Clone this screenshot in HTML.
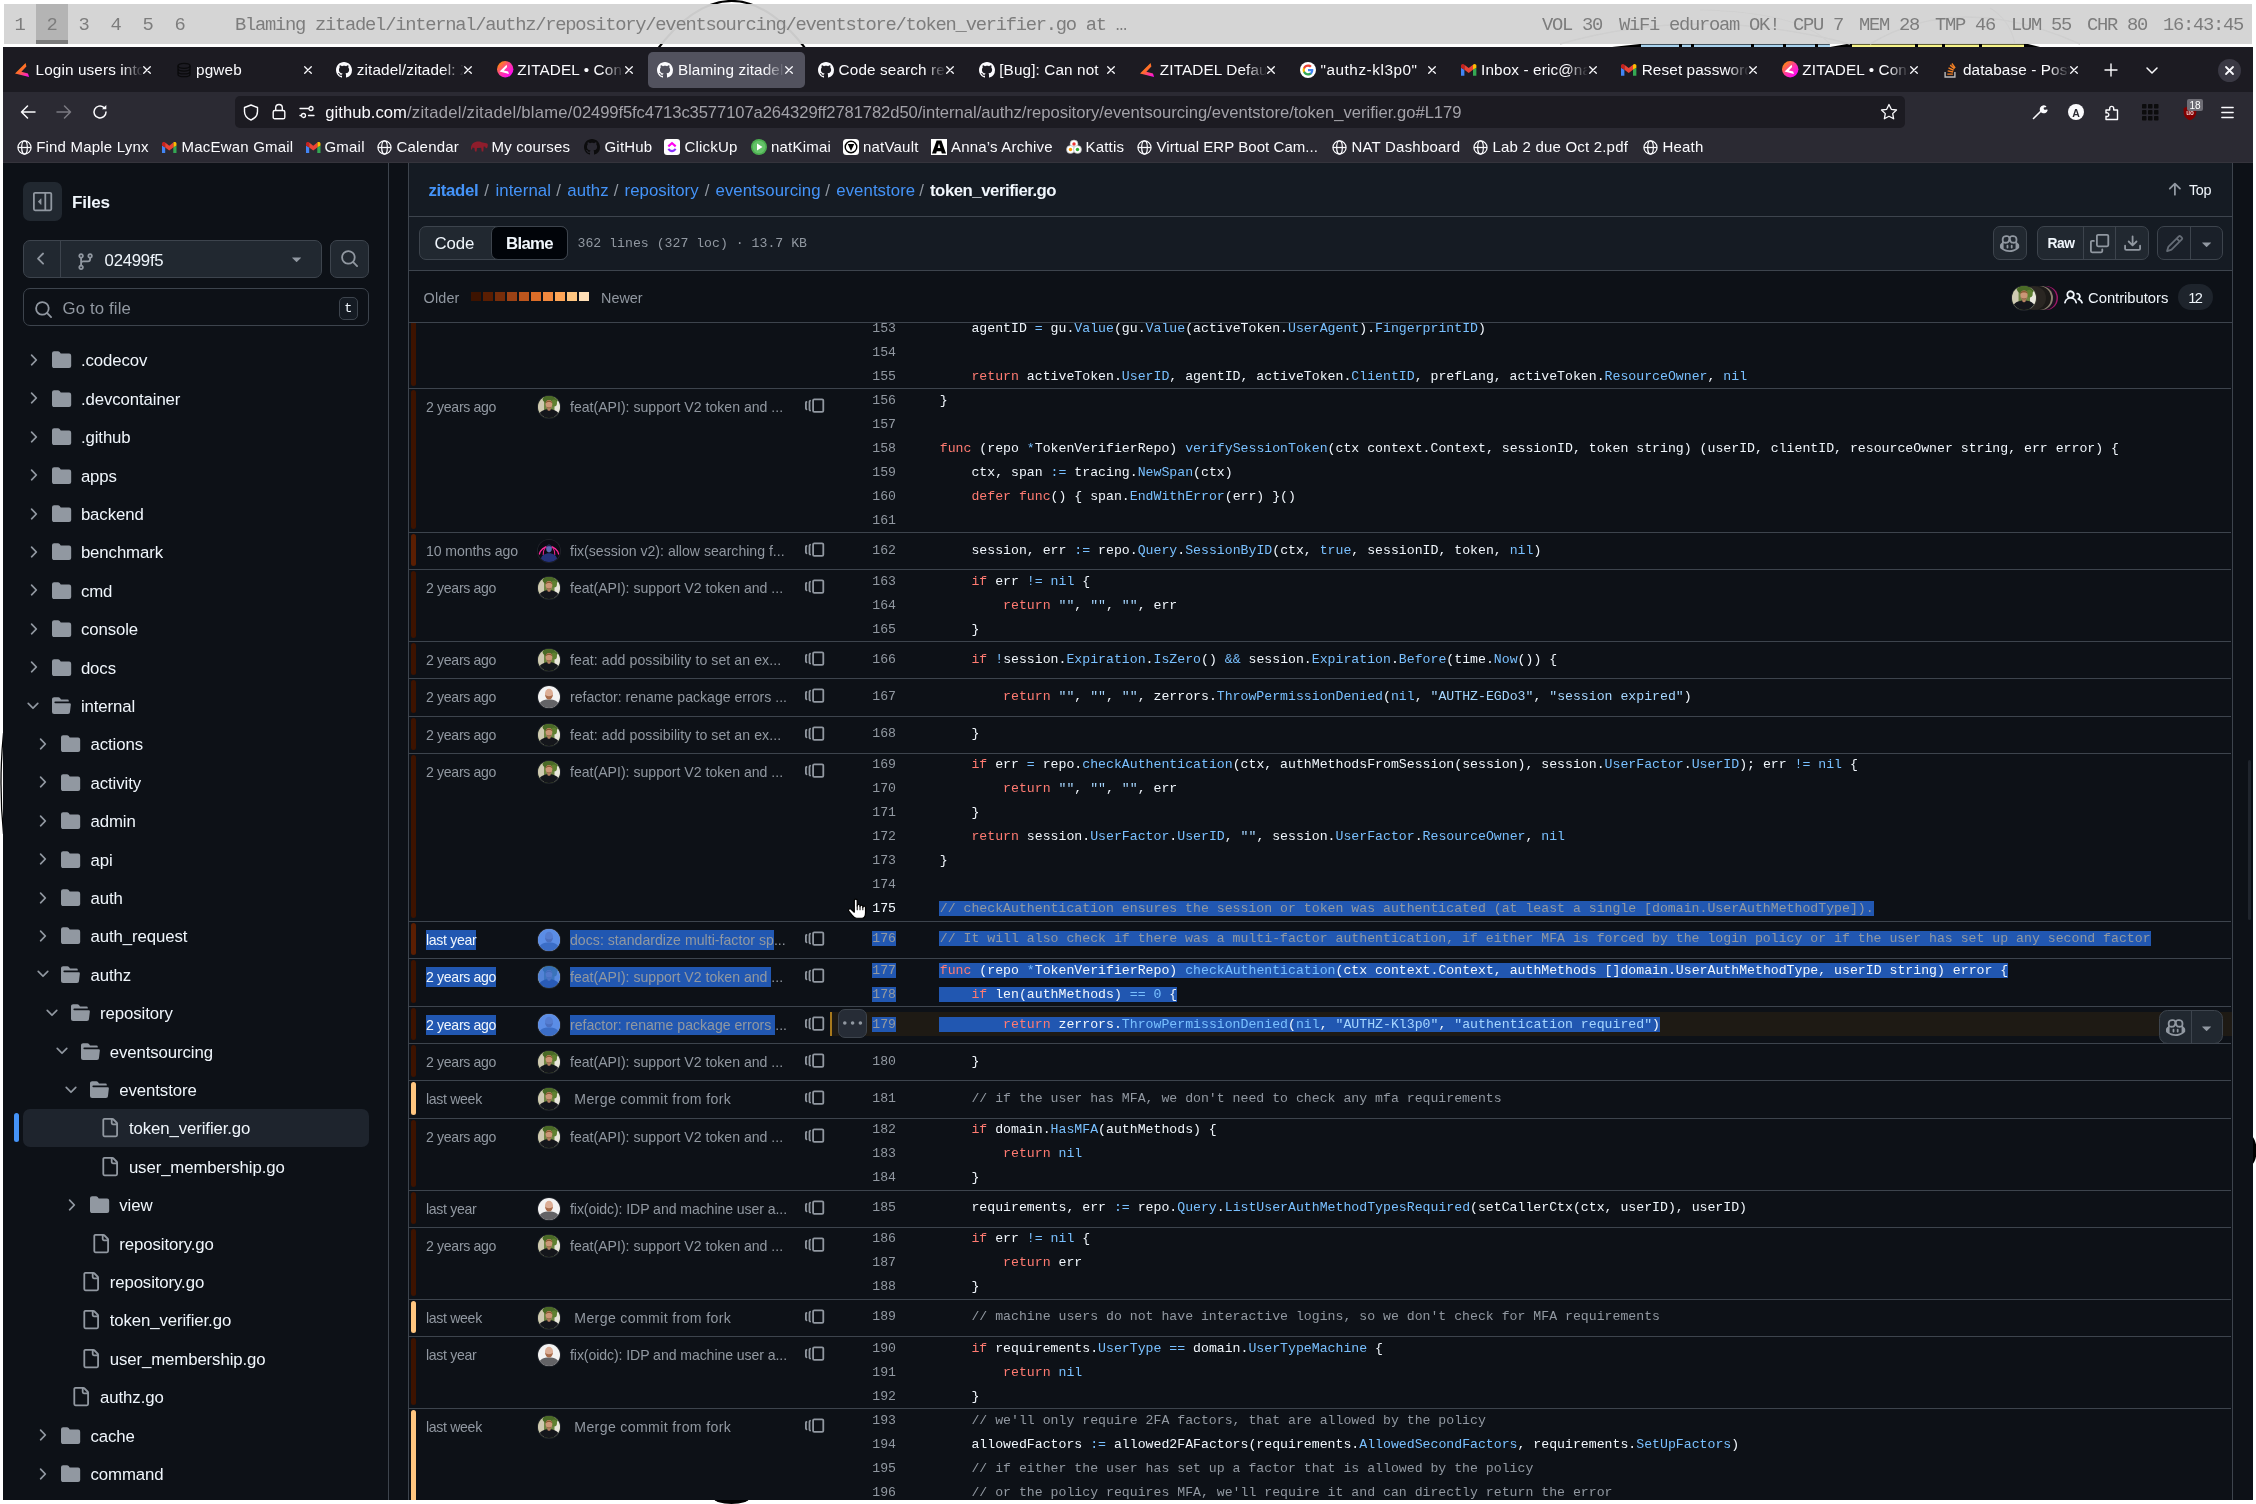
<!DOCTYPE html><html><head><meta charset="utf-8"><title>Blaming zitadel</title><style>
*{box-sizing:border-box}
html,body{margin:0;padding:0}
body{width:2256px;height:1504px;background:#fff;position:relative;overflow:hidden;font-family:"Liberation Sans",sans-serif;-webkit-font-smoothing:antialiased}
.a{position:absolute}
.t{position:absolute;height:30px;line-height:30px;white-space:pre}
svg{position:absolute;overflow:visible}
#win{position:absolute;left:3px;top:47px;width:2250px;height:1453px;background:#0d1117;overflow:hidden}
#pg{position:absolute;left:-3px;top:-47px;width:2256px;height:1504px;will-change:transform}
.m{font-family:"Liberation Mono",monospace}
.cl{position:absolute;left:939.8px;height:24px;line-height:24px;font-family:"Liberation Mono",monospace;font-size:13.2px;color:#f0f6fc;white-space:pre}
.ln{position:absolute;left:846px;width:50px;text-align:right;height:24px;line-height:24px;font-family:"Liberation Mono",monospace;font-size:13.2px;color:#9198a1;white-space:pre}
.k{color:#ff7b72}.b{color:#79c0ff}.s{color:#a5d6ff}.c{color:#9198a1}
.sel{background:#2157b1;padding-left:1px;margin-left:-1px}
.sel2{background:#2157b1;padding:1.8px 0 1.6px}
.hb{position:absolute;left:409px;width:1822px;height:1px;background:#3d444d}
</style></head><body>
<svg class="a" style="left:0;top:0" width="2256" height="1504" viewBox="0 0 2256 1504"><path d="M655 52.300Q731.600-50.300 808.300 52.300" fill="none" stroke="#000" stroke-width="2.200"/><path d="M1612 47 1640 44H1830V47z" fill="#000"/><rect x="1641" y="44.600" width="189" height="3" fill="#aad4f0"/><path d="M1830 47 1850 43.500H2026L2040 47z" fill="#000"/><rect x="1852" y="44.600" width="172" height="3" fill="#f7f48a"/><rect x="1679" y="44" width="3" height="3" fill="#000"/><rect x="1691" y="44" width="3" height="3" fill="#000"/><rect x="1751" y="44" width="3" height="3" fill="#000"/><rect x="1783" y="44" width="3" height="3" fill="#000"/><rect x="1815" y="44" width="3" height="3" fill="#000"/><rect x="1915" y="44" width="3" height="3" fill="#000"/><rect x="1942" y="44" width="3" height="3" fill="#000"/><rect x="1979" y="44" width="3" height="3" fill="#000"/><ellipse cx="2250" cy="1150.500" rx="6.500" ry="15" fill="#000"/><ellipse cx="731.500" cy="1498" rx="18" ry="6" fill="#000"/><path d="M3.500 733Q-1.500 783 3.500 834" fill="none" stroke="#000" stroke-width="1.300"/></svg>
<div class="a" style="left:0;top:0;width:2256px;height:46px;will-change:transform">
<div class="a" style="left:4px;top:4px;width:2248px;height:40px;background:rgba(211,211,211,.957);"></div>
<svg class="a" style="left:0;top:0" width="2256" height="48"><path d="M1560 44 Q1700 4 1850 44" fill="none" stroke="#cfcfcf" stroke-width="1.500"/><path d="M1870 44 Q1960 -10 2080 44" fill="none" stroke="#cfcfcf" stroke-width="1.500"/><path d="M1700 10 Q1800 12 1830 44M1990 8 Q2010 20 2015 44" fill="none" stroke="#d0d0d0" stroke-width="1.200"/></svg>
<div class="a" style="left:36px;top:4px;width:32px;height:40px;background:#b4b4b4;"></div>
<div class="a" style="left:36px;top:40px;width:32px;height:4px;background:#7b7b7b;"></div>
<div class="t" style="left:3.42px;top:9.70px;font-size:18.8px;color:#7d7d7d;letter-spacing:-1.262px;width:32px;text-align:center;font-family:'Liberation Mono',monospace;">1</div>
<div class="t" style="left:35.42px;top:9.70px;font-size:18.8px;color:#7d7d7d;letter-spacing:-1.262px;width:32px;text-align:center;font-family:'Liberation Mono',monospace;">2</div>
<div class="t" style="left:67.42px;top:9.70px;font-size:18.8px;color:#7d7d7d;letter-spacing:-1.262px;width:32px;text-align:center;font-family:'Liberation Mono',monospace;">3</div>
<div class="t" style="left:99.42px;top:9.70px;font-size:18.8px;color:#7d7d7d;letter-spacing:-1.262px;width:32px;text-align:center;font-family:'Liberation Mono',monospace;">4</div>
<div class="t" style="left:131.42px;top:9.70px;font-size:18.8px;color:#7d7d7d;letter-spacing:-1.262px;width:32px;text-align:center;font-family:'Liberation Mono',monospace;">5</div>
<div class="t" style="left:163.42px;top:9.70px;font-size:18.8px;color:#7d7d7d;letter-spacing:-1.262px;width:32px;text-align:center;font-family:'Liberation Mono',monospace;">6</div>
<div class="t" style="left:235px;top:9.70px;font-size:18.8px;color:#7d7d7d;letter-spacing:-1.262px;font-family:'Liberation Mono',monospace;">Blaming zitadel/internal/authz/repository/eventsourcing/eventstore/token_verifier.go at …</div>
<div class="t" style="left:1542px;top:9.70px;font-size:18.8px;color:#7d7d7d;letter-spacing:-1.262px;font-family:'Liberation Mono',monospace;">VOL 30</div>
<div class="t" style="left:1619px;top:9.70px;font-size:18.8px;color:#7d7d7d;letter-spacing:-1.262px;font-family:'Liberation Mono',monospace;">WiFi eduroam OK!</div>
<div class="t" style="left:1793px;top:9.70px;font-size:18.8px;color:#7d7d7d;letter-spacing:-1.262px;font-family:'Liberation Mono',monospace;">CPU 7</div>
<div class="t" style="left:1859px;top:9.70px;font-size:18.8px;color:#7d7d7d;letter-spacing:-1.262px;font-family:'Liberation Mono',monospace;">MEM 28</div>
<div class="t" style="left:1935px;top:9.70px;font-size:18.8px;color:#7d7d7d;letter-spacing:-1.262px;font-family:'Liberation Mono',monospace;">TMP 46</div>
<div class="t" style="left:2011px;top:9.70px;font-size:18.8px;color:#7d7d7d;letter-spacing:-1.262px;font-family:'Liberation Mono',monospace;">LUM 55</div>
<div class="t" style="left:2087px;top:9.70px;font-size:18.8px;color:#7d7d7d;letter-spacing:-1.262px;font-family:'Liberation Mono',monospace;">CHR 80</div>
<div class="t" style="left:2163px;top:9.70px;font-size:18.8px;color:#7d7d7d;letter-spacing:-1.262px;font-family:'Liberation Mono',monospace;">16:43:45</div>
</div>
<div id="win"><div id="pg">
<div class="a" style="left:0px;top:47px;width:2256px;height:45px;background:#1c1b22;"></div>
<div class="a" style="left:0px;top:92px;width:2256px;height:36px;background:#2b2a33;"></div>
<div class="a" style="left:0px;top:128px;width:2256px;height:35px;background:#2b2a33;"></div>
<div class="a" style="left:0px;top:162px;width:2256px;height:1px;background:#35343c;"></div>
<svg style="left:15.2px;top:62.6px" width="14.100" height="14" viewBox="0 0 14.100 14"><defs><linearGradient id="zl15" x1="0.200" y1="0" x2="1" y2="1"><stop offset="0" stop-color="#ff8f00"/><stop offset=".45" stop-color="#ff6a30"/><stop offset="1" stop-color="#fe00ff"/></linearGradient></defs><path d="M10.6 0 11.4 3.500 6.400 8.800 13 10.400 14.100 14 0 10.400z" fill="url(#zl15)"/></svg>
<div class="t" style="left:35.5px;top:54.70px;font-size:15.3px;color:#fbfbfe;letter-spacing:0.12px;width:108px;overflow:hidden;-webkit-mask-image:linear-gradient(to right,#000 80%,transparent 99%);mask-image:linear-gradient(to right,#000 80%,transparent 99%);">Login users into</div>
<svg style="left:143.0px;top:66px" width="8" height="8" viewBox="0 0 8 8" stroke="#fbfbfe" stroke-width="1.300" stroke-linecap="round"><path d="M.7.7l6.600 6.600M7.300.7.7 7.300"/></svg>
<svg style="left:175.62px;top:61.5px" width="16" height="16" viewBox="0 0 16 16" fill="none" stroke="#0a0a0c" stroke-width="1.300"><ellipse cx="8" cy="3.800" rx="6" ry="2.500"/><path d="M2 3.800v8.400c0 1.400 2.700 2.500 6 2.500s6-1.100 6-2.500V3.800M2 6.600c0 1.400 2.700 2.500 6 2.500s6-1.100 6-2.500M2 9.400c0 1.400 2.700 2.500 6 2.500s6-1.100 6-2.500"/></svg>
<div class="t" style="left:196.12px;top:54.70px;font-size:15.3px;color:#fbfbfe;letter-spacing:0.12px;width:108px;overflow:hidden;">pgweb</div>
<svg style="left:303.62px;top:66px" width="8" height="8" viewBox="0 0 8 8" stroke="#fbfbfe" stroke-width="1.300" stroke-linecap="round"><path d="M.7.7l6.600 6.600M7.300.7.7 7.300"/></svg>
<svg style="position:absolute;left:336.24px;top:61.5px" width="16" height="16" viewBox="0 0 16 16" fill="#fbfbfe"><path d="M8 0C3.58 0 0 3.58 0 8c0 3.54 2.29 6.53 5.47 7.59.4.07.55-.17.55-.38 0-.19-.01-.82-.01-1.49-2.01.37-2.53-.49-2.69-.94-.09-.23-.48-.94-.82-1.13-.28-.15-.68-.52-.01-.53.63-.01 1.08.58 1.23.82.72 1.21 1.87.87 2.33.66.07-.52.28-.87.51-1.07-1.78-.2-3.64-.89-3.64-3.95 0-.87.31-1.59.82-2.15-.08-.2-.36-1.02.08-2.12 0 0 .67-.21 2.2.82.64-.18 1.32-.27 2-.27.68 0 1.36.09 2 .27 1.53-1.04 2.2-.82 2.2-.82.44 1.1.16 1.92.08 2.12.51.56.82 1.27.82 2.15 0 3.07-1.87 3.75-3.65 3.95.29.25.54.73.54 1.48 0 1.07-.01 1.93-.01 2.2 0 .21.15.46.55.38A8.013 8.013 0 0 0 16 8c0-4.42-3.58-8-8-8z"/></svg>
<div class="t" style="left:356.74px;top:54.70px;font-size:15.3px;color:#fbfbfe;letter-spacing:0.12px;width:108px;overflow:hidden;-webkit-mask-image:linear-gradient(to right,#000 80%,transparent 99%);mask-image:linear-gradient(to right,#000 80%,transparent 99%);">zitadel/zitadel: ZITADEL</div>
<svg style="left:464.24px;top:66px" width="8" height="8" viewBox="0 0 8 8" stroke="#fbfbfe" stroke-width="1.300" stroke-linecap="round"><path d="M.7.7l6.600 6.600M7.300.7.7 7.300"/></svg>
<svg style="left:496.76px;top:61.3px" width="16.400" height="16.400" viewBox="0 0 16.400 16.400"><defs><linearGradient id="zg496" x1="0.100" y1="0.100" x2=".9" y2=".9"><stop offset="0" stop-color="#ff8f00"/><stop offset=".5" stop-color="#ff3aa0"/><stop offset="1" stop-color="#fe00ff"/></linearGradient></defs><circle cx="8.200" cy="8.200" r="8.200" fill="url(#zg496)"/><path d="M10.6 0 11.4 3.500 6.400 8.800 13 10.400 14.100 14 0 10.400z" fill="#fff" transform="translate(2.600 3.700) scale(.66)"/></svg>
<div class="t" style="left:517.36px;top:54.70px;font-size:15.3px;color:#fbfbfe;letter-spacing:0.12px;width:108px;overflow:hidden;-webkit-mask-image:linear-gradient(to right,#000 80%,transparent 99%);mask-image:linear-gradient(to right,#000 80%,transparent 99%);">ZITADEL • Console</div>
<svg style="left:624.86px;top:66px" width="8" height="8" viewBox="0 0 8 8" stroke="#fbfbfe" stroke-width="1.300" stroke-linecap="round"><path d="M.7.7l6.600 6.600M7.300.7.7 7.300"/></svg>
<div class="a" style="left:648px;top:52px;width:157px;height:36px;background:#52525e;border-radius:5px;"></div>
<svg style="position:absolute;left:657.48px;top:61.5px" width="16" height="16" viewBox="0 0 16 16" fill="#fbfbfe"><path d="M8 0C3.58 0 0 3.58 0 8c0 3.54 2.29 6.53 5.47 7.59.4.07.55-.17.55-.38 0-.19-.01-.82-.01-1.49-2.01.37-2.53-.49-2.69-.94-.09-.23-.48-.94-.82-1.13-.28-.15-.68-.52-.01-.53.63-.01 1.08.58 1.23.82.72 1.21 1.87.87 2.33.66.07-.52.28-.87.51-1.07-1.78-.2-3.64-.89-3.64-3.95 0-.87.31-1.59.82-2.15-.08-.2-.36-1.02.08-2.12 0 0 .67-.21 2.2.82.64-.18 1.32-.27 2-.27.68 0 1.36.09 2 .27 1.53-1.04 2.2-.82 2.2-.82.44 1.1.16 1.92.08 2.12.51.56.82 1.27.82 2.15 0 3.07-1.87 3.75-3.65 3.95.29.25.54.73.54 1.48 0 1.07-.01 1.93-.01 2.2 0 .21.15.46.55.38A8.013 8.013 0 0 0 16 8c0-4.42-3.58-8-8-8z"/></svg>
<div class="t" style="left:677.98px;top:54.70px;font-size:15.3px;color:#fbfbfe;letter-spacing:0.12px;width:108px;overflow:hidden;-webkit-mask-image:linear-gradient(to right,#000 80%,transparent 99%);mask-image:linear-gradient(to right,#000 80%,transparent 99%);">Blaming zitadel/</div>
<svg style="left:785.48px;top:66px" width="8" height="8" viewBox="0 0 8 8" stroke="#fbfbfe" stroke-width="1.300" stroke-linecap="round"><path d="M.7.7l6.600 6.600M7.300.7.7 7.300"/></svg>
<svg style="position:absolute;left:818.1px;top:61.5px" width="16" height="16" viewBox="0 0 16 16" fill="#fbfbfe"><path d="M8 0C3.58 0 0 3.58 0 8c0 3.54 2.29 6.53 5.47 7.59.4.07.55-.17.55-.38 0-.19-.01-.82-.01-1.49-2.01.37-2.53-.49-2.69-.94-.09-.23-.48-.94-.82-1.13-.28-.15-.68-.52-.01-.53.63-.01 1.08.58 1.23.82.72 1.21 1.87.87 2.33.66.07-.52.28-.87.51-1.07-1.78-.2-3.64-.89-3.64-3.95 0-.87.31-1.59.82-2.15-.08-.2-.36-1.02.08-2.12 0 0 .67-.21 2.2.82.64-.18 1.32-.27 2-.27.68 0 1.36.09 2 .27 1.53-1.04 2.2-.82 2.2-.82.44 1.1.16 1.92.08 2.12.51.56.82 1.27.82 2.15 0 3.07-1.87 3.75-3.65 3.95.29.25.54.73.54 1.48 0 1.07-.01 1.93-.01 2.2 0 .21.15.46.55.38A8.013 8.013 0 0 0 16 8c0-4.42-3.58-8-8-8z"/></svg>
<div class="t" style="left:838.6px;top:54.70px;font-size:15.3px;color:#fbfbfe;letter-spacing:0.12px;width:108px;overflow:hidden;-webkit-mask-image:linear-gradient(to right,#000 80%,transparent 99%);mask-image:linear-gradient(to right,#000 80%,transparent 99%);">Code search results</div>
<svg style="left:946.1px;top:66px" width="8" height="8" viewBox="0 0 8 8" stroke="#fbfbfe" stroke-width="1.300" stroke-linecap="round"><path d="M.7.7l6.600 6.600M7.300.7.7 7.300"/></svg>
<svg style="position:absolute;left:978.72px;top:61.5px" width="16" height="16" viewBox="0 0 16 16" fill="#fbfbfe"><path d="M8 0C3.58 0 0 3.58 0 8c0 3.54 2.29 6.53 5.47 7.59.4.07.55-.17.55-.38 0-.19-.01-.82-.01-1.49-2.01.37-2.53-.49-2.69-.94-.09-.23-.48-.94-.82-1.13-.28-.15-.68-.52-.01-.53.63-.01 1.08.58 1.23.82.72 1.21 1.87.87 2.33.66.07-.52.28-.87.51-1.07-1.78-.2-3.64-.89-3.64-3.95 0-.87.31-1.59.82-2.15-.08-.2-.36-1.02.08-2.12 0 0 .67-.21 2.2.82.64-.18 1.32-.27 2-.27.68 0 1.36.09 2 .27 1.53-1.04 2.2-.82 2.2-.82.44 1.1.16 1.92.08 2.12.51.56.82 1.27.82 2.15 0 3.07-1.87 3.75-3.65 3.95.29.25.54.73.54 1.48 0 1.07-.01 1.93-.01 2.2 0 .21.15.46.55.38A8.013 8.013 0 0 0 16 8c0-4.42-3.58-8-8-8z"/></svg>
<div class="t" style="left:999.22px;top:54.70px;font-size:15.3px;color:#fbfbfe;letter-spacing:0.12px;width:108px;overflow:hidden;">[Bug]: Can not </div>
<svg style="left:1106.72px;top:66px" width="8" height="8" viewBox="0 0 8 8" stroke="#fbfbfe" stroke-width="1.300" stroke-linecap="round"><path d="M.7.7l6.600 6.600M7.300.7.7 7.300"/></svg>
<svg style="left:1139.5400000000002px;top:62.6px" width="14.100" height="14" viewBox="0 0 14.100 14"><defs><linearGradient id="zl1139" x1="0.200" y1="0" x2="1" y2="1"><stop offset="0" stop-color="#ff8f00"/><stop offset=".45" stop-color="#ff6a30"/><stop offset="1" stop-color="#fe00ff"/></linearGradient></defs><path d="M10.6 0 11.4 3.500 6.400 8.800 13 10.400 14.100 14 0 10.400z" fill="url(#zl1139)"/></svg>
<div class="t" style="left:1159.8400000000001px;top:54.70px;font-size:15.3px;color:#fbfbfe;letter-spacing:0.12px;width:108px;overflow:hidden;-webkit-mask-image:linear-gradient(to right,#000 80%,transparent 99%);mask-image:linear-gradient(to right,#000 80%,transparent 99%);">ZITADEL Default</div>
<svg style="left:1267.3400000000001px;top:66px" width="8" height="8" viewBox="0 0 8 8" stroke="#fbfbfe" stroke-width="1.300" stroke-linecap="round"><path d="M.7.7l6.600 6.600M7.300.7.7 7.300"/></svg>
<svg style="left:1299.96px;top:61.5px" width="16" height="16" viewBox="0 0 16 16"><circle cx="8" cy="8" r="8" fill="#fff"/><path d="M13.3 8.1c0-.4 0-.7-.1-1H8v2.100h3c-.1.700-.5 1.200-1.100 1.600v1.400h1.800c1-1 1.600-2.400 1.600-4.100z" fill="#4285f4"/><path d="M8 13.500c1.500 0 2.700-.5 3.600-1.300l-1.800-1.400c-.5.300-1.100.5-1.800.5-1.400 0-2.600-.9-3-2.200H3.200v1.400c.9 1.800 2.700 3 4.800 3z" fill="#34a853"/><path d="M5 9.100c-.1-.3-.2-.7-.2-1.100s.1-.8.200-1.100V5.500H3.200C2.800 6.300 2.600 7.100 2.600 8s.2 1.700.6 2.500z" fill="#fbbc05"/><path d="M8 4.700c.8 0 1.500.3 2.100.8l1.600-1.600C10.700 3 9.500 2.500 8 2.500c-2.100 0-3.900 1.200-4.800 3l1.800 1.400c.4-1.300 1.600-2.200 3-2.200z" fill="#ea4335"/></svg>
<div class="t" style="left:1320.46px;top:54.70px;font-size:15.3px;color:#fbfbfe;letter-spacing:0.55px;width:108px;overflow:hidden;">&quot;authz-kl3p0&quot; </div>
<svg style="left:1427.96px;top:66px" width="8" height="8" viewBox="0 0 8 8" stroke="#fbfbfe" stroke-width="1.300" stroke-linecap="round"><path d="M.7.7l6.600 6.600M7.300.7.7 7.300"/></svg>
<svg style="left:1460.58px;top:63.65862068965517px" width="15.40" height="11.68" viewBox="0 0 14.500 11"><path d="M0 3.600 3.200 5.500V11H0z" fill="#4285f4"/><path d="M14.500 3.600 11.300 5.500V11h3.200z" fill="#34a853"/><path d="M0 3.600V1.700C0 .3 1.700-.5 3.200.6v4.900z" fill="#c5221f"/><path d="M14.500 3.600V1.700c0-1.400-1.700-2.200-3.200-1.100v4.900z" fill="#fbbc04"/><path d="M3.200.6 7.250 3.700 11.300.6v4.900L7.250 8.500 3.200 5.500z" fill="#ea4335"/></svg>
<div class="t" style="left:1481.08px;top:54.70px;font-size:15.3px;color:#fbfbfe;letter-spacing:0.12px;width:108px;overflow:hidden;-webkit-mask-image:linear-gradient(to right,#000 80%,transparent 99%);mask-image:linear-gradient(to right,#000 80%,transparent 99%);">Inbox - eric@nat</div>
<svg style="left:1588.58px;top:66px" width="8" height="8" viewBox="0 0 8 8" stroke="#fbfbfe" stroke-width="1.300" stroke-linecap="round"><path d="M.7.7l6.600 6.600M7.300.7.7 7.300"/></svg>
<svg style="left:1621.2px;top:63.65862068965517px" width="15.40" height="11.68" viewBox="0 0 14.500 11"><path d="M0 3.600 3.200 5.500V11H0z" fill="#4285f4"/><path d="M14.500 3.600 11.300 5.500V11h3.200z" fill="#34a853"/><path d="M0 3.600V1.700C0 .3 1.700-.5 3.200.6v4.900z" fill="#c5221f"/><path d="M14.500 3.600V1.700c0-1.400-1.700-2.200-3.200-1.100v4.900z" fill="#fbbc04"/><path d="M3.200.6 7.250 3.700 11.300.6v4.900L7.250 8.500 3.200 5.500z" fill="#ea4335"/></svg>
<div class="t" style="left:1641.7px;top:54.70px;font-size:15.3px;color:#fbfbfe;letter-spacing:0.12px;width:108px;overflow:hidden;-webkit-mask-image:linear-gradient(to right,#000 80%,transparent 99%);mask-image:linear-gradient(to right,#000 80%,transparent 99%);">Reset password</div>
<svg style="left:1749.2px;top:66px" width="8" height="8" viewBox="0 0 8 8" stroke="#fbfbfe" stroke-width="1.300" stroke-linecap="round"><path d="M.7.7l6.600 6.600M7.300.7.7 7.300"/></svg>
<svg style="left:1781.7200000000003px;top:61.3px" width="16.400" height="16.400" viewBox="0 0 16.400 16.400"><defs><linearGradient id="zg1781" x1="0.100" y1="0.100" x2=".9" y2=".9"><stop offset="0" stop-color="#ff8f00"/><stop offset=".5" stop-color="#ff3aa0"/><stop offset="1" stop-color="#fe00ff"/></linearGradient></defs><circle cx="8.200" cy="8.200" r="8.200" fill="url(#zg1781)"/><path d="M10.6 0 11.4 3.500 6.400 8.800 13 10.400 14.100 14 0 10.400z" fill="#fff" transform="translate(2.600 3.700) scale(.66)"/></svg>
<div class="t" style="left:1802.3200000000002px;top:54.70px;font-size:15.3px;color:#fbfbfe;letter-spacing:0.12px;width:108px;overflow:hidden;-webkit-mask-image:linear-gradient(to right,#000 80%,transparent 99%);mask-image:linear-gradient(to right,#000 80%,transparent 99%);">ZITADEL • Console</div>
<svg style="left:1909.8200000000002px;top:66px" width="8" height="8" viewBox="0 0 8 8" stroke="#fbfbfe" stroke-width="1.300" stroke-linecap="round"><path d="M.7.7l6.600 6.600M7.300.7.7 7.300"/></svg>
<svg style="left:1942.44px;top:61.5px" width="16" height="16" viewBox="0 0 16 16"><path d="M12.200 14.300V10h1.400v5.700H2.400V10h1.400v4.300z" fill="#bcbbbb"/><path d="M5.300 12.800h5.600v-1.400H5.300zM5.500 9.600l5.500 1.100.3-1.400-5.500-1.100zM6.200 6.500l5.100 2.400.6-1.300-5.100-2.400zM7.700 3.700l4.300 3.600.9-1.100-4.300-3.600zM10.400 1.100l-1.100.8 3.300 4.500 1.100-.8z" fill="#f48024"/></svg>
<div class="t" style="left:1962.94px;top:54.70px;font-size:15.3px;color:#fbfbfe;letter-spacing:0.12px;width:108px;overflow:hidden;-webkit-mask-image:linear-gradient(to right,#000 80%,transparent 99%);mask-image:linear-gradient(to right,#000 80%,transparent 99%);">database - Postgres</div>
<svg style="left:2070.44px;top:66px" width="8" height="8" viewBox="0 0 8 8" stroke="#fbfbfe" stroke-width="1.300" stroke-linecap="round"><path d="M.7.7l6.600 6.600M7.300.7.7 7.300"/></svg>
<svg style="left:2104px;top:63px" width="14" height="14" viewBox="0 0 14 14" stroke="#fbfbfe" stroke-width="1.400" stroke-linecap="round"><path d="M7 1v12M1 7h12"/></svg>
<svg style="left:2146px;top:66.500px" width="12" height="8" viewBox="0 0 12 8" stroke="#fbfbfe" stroke-width="1.500" fill="none" stroke-linecap="round" stroke-linejoin="round"><path d="M1 1l5 5 5-5"/></svg>
<div class="a" style="left:2218px;top:58.5px;width:23px;height:23px;background:#3a3944;border-radius:12px;"></div>
<svg style="left:2225px;top:65.500px" width="9" height="9" viewBox="0 0 9 9" stroke="#fbfbfe" stroke-width="1.800" stroke-linecap="round"><path d="M1 1l7 7M8 1l-7 7"/></svg>
<svg style="left:20px;top:104px" width="16" height="16" viewBox="0 0 16 16" stroke="#fbfbfe" stroke-width="1.500" fill="none" stroke-linecap="round" stroke-linejoin="round"><path d="M15 8H1.500M7.500 2 1.500 8l6 6"/></svg>
<svg style="left:56px;top:104px" width="16" height="16" viewBox="0 0 16 16" stroke="#7b7a82" stroke-width="1.500" fill="none" stroke-linecap="round" stroke-linejoin="round"><path d="M1 8h13.500M8.500 2l6 6-6 6"/></svg>
<svg style="left:92px;top:104px" width="16" height="16" viewBox="0 0 16 16" stroke="#fbfbfe" stroke-width="1.500" fill="none" stroke-linecap="round" stroke-linejoin="round"><path d="M14 8a6 6 0 1 1-2.200-4.650"/><path d="M14.300 1v4.300H10z" fill="#fbfbfe" stroke="none"/></svg>
<div class="a" style="left:235px;top:96px;width:1670px;height:32px;background:#1c1b22;border-radius:5px;"></div>
<svg style="left:243px;top:103.500px" width="16" height="17" viewBox="0 0 16 17" stroke="#fbfbfe" stroke-width="1.400" fill="none" stroke-linejoin="round"><path d="M8 1 1.500 3.500v4c0 4 2.700 7 6.500 8.500 3.800-1.500 6.500-4.500 6.500-8.500v-4z"/></svg>
<svg style="left:272px;top:103px" width="14" height="17" viewBox="0 0 14 17" stroke="#fbfbfe" stroke-width="1.400" fill="none" stroke-linejoin="round"><rect x="1.200" y="7.500" width="11.600" height="8.300" rx="1.600"/><path d="M3.700 7.500V4.800a3.300 3.300 0 0 1 6.600 0v2.700"/></svg>
<svg style="left:299px;top:105px" width="16" height="14" viewBox="0 0 16 14" stroke="#fbfbfe" stroke-width="1.300" fill="none" stroke-linecap="round"><path d="M1 3.500h8.500M9.500 10.500H15M1 10.500h1"/><circle cx="12" cy="3.500" r="2"/><circle cx="4.500" cy="10.500" r="2"/></svg>
<div class="t" style="left:325.3px;top:98.30px;font-size:16.6px;color:#a3a2a9;"><span style="color:#fbfbfe;letter-spacing:.05px">github.com</span><span style="letter-spacing:.27px">/zitadel/zitadel/blame/</span><span style="letter-spacing:-.09px">02499f5fc4713c3577107a264329ff2781782d50</span><span style="letter-spacing:-.005px">/internal/authz/repository/eventsourcing/eventstore/token_verifier.go#L179</span></div>
<svg style="left:1880px;top:103px" width="18" height="18" viewBox="0 0 18 18" stroke="#fbfbfe" stroke-width="1.300" fill="none" stroke-linejoin="round"><path d="M9 1.500l2.300 4.800 5.200.700-3.800 3.600.950 5.200L9 13.300l-4.650 2.500.950-5.200L1.500 7l5.200-.7z"/></svg>
<svg style="left:2032px;top:104px" width="16" height="16" viewBox="0 0 16 16" fill="none" stroke="#fbfbfe" stroke-width="1.600" stroke-linecap="round"><path d="M1.500 14.500 8.300 7.700"/><path d="M13.600 2.600A3.300 3.300 0 1 0 14.900 6.200L12.300 6.600 10.900 5.200 11.300 2.700z" stroke-linejoin="round" stroke-width="1.400" fill="#fbfbfe"/></svg>
<div class="a" style="left:2068px;top:104.2px;width:16px;height:16px;background:#fbfbfe;border-radius:8px;"></div>
<div class="t" style="left:2068px;top:98.00px;font-size:10.5px;color:#2b2a33;font-weight:700;width:16px;text-align:center;">A</div>
<svg style="left:2103px;top:103px" width="18" height="18" viewBox="0 0 18 18" stroke="#fbfbfe" stroke-width="1.400" fill="none" stroke-linejoin="round"><path d="M3 7h3.700V5.400a2 2 0 1 1 4 0V7h3.800v9.500H3v-3.200a1.900 1.900 0 1 0 0-3.300z"/></svg>
<svg style="left:2141px;top:103px" width="18" height="18" viewBox="0 0 18 18" fill="#0c0c0d"><rect x="1" y="1" width="4.500" height="4.500" rx=".8"/><rect x="7" y="1" width="4.500" height="4.500" rx=".8"/><rect x="13" y="1" width="4.500" height="4.500" rx=".8"/><rect x="1" y="7" width="4.500" height="4.500" rx=".8"/><rect x="7" y="7" width="4.500" height="4.500" rx=".8"/><rect x="13" y="7" width="4.500" height="4.500" rx=".8"/><rect x="1" y="13" width="4.500" height="4.500" rx=".8"/><rect x="7" y="13" width="4.500" height="4.500" rx=".8"/><rect x="13" y="13" width="4.500" height="4.500" rx=".8"/></svg>
<svg style="left:2182px;top:105px" width="16" height="16" viewBox="0 0 19 19"><path d="M9.500 1 2 3.500v5c0 4.500 3 7.800 7.500 9.500 4.500-1.700 7.500-5 7.500-9.500v-5z" fill="#800000"/><text x="9.500" y="12" font-size="7.500" font-weight="700" fill="#e8c8c8" text-anchor="middle" font-family="Liberation Sans">uo</text></svg>
<div class="a" style="left:2187px;top:99px;width:16px;height:12px;background:#6e6d75;border-radius:2px;"></div>
<div class="t" style="left:2187px;top:91.00px;font-size:10px;color:#fff;width:16px;text-align:center;">18</div>
<svg style="left:2221px;top:105.500px" width="13" height="13" viewBox="0 0 13 13" stroke="#fbfbfe" stroke-width="1.300" stroke-linecap="round"><path d="M.8 1.500h11.400M.8 6.500h11.400M.8 11.500h11.400"/></svg>
<svg style="left:17px;top:139.8px" width="15" height="15" viewBox="0 0 16 16" fill="none" stroke="#fbfbfe" stroke-width="1.300"><circle cx="8" cy="8" r="7"/><ellipse cx="8" cy="8" rx="3" ry="7"/><path d="M1 8h14"/></svg><div class="t" style="left:36.2px;top:132.30px;font-size:15px;color:#fbfbfe;letter-spacing:0.2px;">Find Maple Lynx</div>
<svg style="left:161.5px;top:141.8023706896552px" width="14.49" height="11.00" viewBox="0 0 14.500 11"><path d="M0 3.600 3.200 5.500V11H0z" fill="#4285f4"/><path d="M14.500 3.600 11.300 5.500V11h3.200z" fill="#34a853"/><path d="M0 3.600V1.700C0 .3 1.700-.5 3.200.6v4.900z" fill="#c5221f"/><path d="M14.500 3.600V1.700c0-1.400-1.700-2.200-3.200-1.100v4.900z" fill="#fbbc04"/><path d="M3.200.6 7.250 3.700 11.300.6v4.900L7.250 8.500 3.200 5.500z" fill="#ea4335"/></svg><div class="t" style="left:181.6px;top:132.30px;font-size:15px;color:#fbfbfe;letter-spacing:0.2px;">MacEwan Gmail</div>
<svg style="left:305.5px;top:141.8023706896552px" width="14.49" height="11.00" viewBox="0 0 14.500 11"><path d="M0 3.600 3.200 5.500V11H0z" fill="#4285f4"/><path d="M14.500 3.600 11.300 5.500V11h3.200z" fill="#34a853"/><path d="M0 3.600V1.700C0 .3 1.700-.5 3.200.6v4.900z" fill="#c5221f"/><path d="M14.500 3.600V1.700c0-1.400-1.700-2.200-3.200-1.100v4.900z" fill="#fbbc04"/><path d="M3.200.6 7.250 3.700 11.300.6v4.900L7.250 8.500 3.200 5.500z" fill="#ea4335"/></svg><div class="t" style="left:324.5px;top:132.30px;font-size:15px;color:#fbfbfe;letter-spacing:0.2px;">Gmail</div>
<svg style="left:377px;top:139.8px" width="15" height="15" viewBox="0 0 16 16" fill="none" stroke="#fbfbfe" stroke-width="1.300"><circle cx="8" cy="8" r="7"/><ellipse cx="8" cy="8" rx="3" ry="7"/><path d="M1 8h14"/></svg><div class="t" style="left:396.5px;top:132.30px;font-size:15px;color:#fbfbfe;letter-spacing:0.2px;">Calendar</div>
<svg style="left:471px;top:141.3px" width="17" height="12" viewBox="0 0 17 12" fill="#8f1d2c"><path d="M0 6c.5-3 2.500-5 6-5.500 2-.3 4 .3 5.500 1l4 .8c1 .3 1.500 1.200 1.300 2.400l-.600 2.300-1.500.200-.5-1.500-1.500-.3-.4 5h-1.600l-.5-3.700L6 6.900l-.4 3.500H4L3.400 7 1.500 6.400l-.500 2.100H0z"/></svg><div class="t" style="left:491.5px;top:132.30px;font-size:15px;color:#fbfbfe;letter-spacing:0.2px;">My courses</div>
<svg style="position:absolute;left:584px;top:139.3px" width="16" height="16" viewBox="0 0 16 16" fill="#0c0c0d"><path d="M8 0C3.58 0 0 3.58 0 8c0 3.54 2.29 6.53 5.47 7.59.4.07.55-.17.55-.38 0-.19-.01-.82-.01-1.49-2.01.37-2.53-.49-2.69-.94-.09-.23-.48-.94-.82-1.13-.28-.15-.68-.52-.01-.53.63-.01 1.08.58 1.23.82.72 1.21 1.87.87 2.33.66.07-.52.28-.87.51-1.07-1.78-.2-3.64-.89-3.64-3.95 0-.87.31-1.59.82-2.15-.08-.2-.36-1.02.08-2.12 0 0 .67-.21 2.2.82.64-.18 1.32-.27 2-.27.68 0 1.36.09 2 .27 1.53-1.04 2.2-.82 2.2-.82.44 1.1.16 1.92.08 2.12.51.56.82 1.27.82 2.15 0 3.07-1.87 3.75-3.65 3.95.29.25.54.73.54 1.48 0 1.07-.01 1.93-.01 2.2 0 .21.15.46.55.38A8.013 8.013 0 0 0 16 8c0-4.42-3.58-8-8-8z"/></svg><div class="t" style="left:604.5px;top:132.30px;font-size:15px;color:#fbfbfe;letter-spacing:0.2px;">GitHub</div>
<svg style="left:664px;top:139.3px" width="16" height="16" viewBox="0 0 16 16"><rect width="16" height="16" rx="3" fill="#fff"/><path d="M3.500 10.600l1.700-1.300c.9 1.200 1.800 1.700 2.800 1.700s1.900-.5 2.800-1.700l1.700 1.300C11.200 12.300 9.700 13.200 8 13.200s-3.200-.9-4.500-2.600z" fill="#8930fd"/><path d="M8 5.600 5 8.200 3.600 6.600 8 2.800l4.400 3.800L11 8.200z" fill="#ff02f0"/></svg><div class="t" style="left:684.5px;top:132.30px;font-size:15px;color:#fbfbfe;letter-spacing:0.2px;">ClickUp</div>
<svg style="left:751px;top:139.3px" width="16" height="16" viewBox="0 0 16 16"><circle cx="8" cy="8" r="8" fill="#4caf50"/><circle cx="8" cy="8" r="6.300" fill="#7bd77f" opacity=".500"/><path d="M6 4.500v7l5.500-3.500z" fill="#fff"/></svg><div class="t" style="left:771px;top:132.30px;font-size:15px;color:#fbfbfe;letter-spacing:0.2px;">natKimai</div>
<svg style="left:843px;top:139.3px" width="16" height="16" viewBox="0 0 16 16"><rect width="16" height="16" rx="3.500" fill="#fff"/><circle cx="8" cy="8" r="5.800" fill="none" stroke="#000" stroke-width="1.400"/><path d="M4.800 5h6.400L8 12z" fill="#000"/></svg><div class="t" style="left:863px;top:132.30px;font-size:15px;color:#fbfbfe;letter-spacing:0.2px;">natVault</div>
<svg style="left:931px;top:139.3px" width="16" height="16" viewBox="0 0 16 16"><rect width="16" height="16" fill="#fff"/><path d="M5.600 1.500h4.800L15 14.500h-4.200l-.6-2.300H5.800l-.6 2.300H1zM6.700 9h2.600L8 4.500z" fill="#000"/></svg><div class="t" style="left:951px;top:132.30px;font-size:15px;color:#fbfbfe;letter-spacing:0.2px;">Anna’s Archive</div>
<svg style="left:1066px;top:139.3px" width="16" height="16" viewBox="0 0 16 16"><circle cx="8" cy="5" r="4" fill="#fff" stroke="#aaa" stroke-width=".600"/><circle cx="4.500" cy="10.500" r="4" fill="#fff" stroke="#aaa" stroke-width=".600"/><circle cx="11.500" cy="10.500" r="4" fill="#fff" stroke="#aaa" stroke-width=".600"/><circle cx="8" cy="5" r="1.700" fill="#e33"/><circle cx="4.500" cy="10.500" r="1.700" fill="#f90"/><circle cx="11.500" cy="10.500" r="1.700" fill="#3a3"/></svg><div class="t" style="left:1085.5px;top:132.30px;font-size:15px;color:#fbfbfe;letter-spacing:0.2px;">Kattis</div>
<svg style="left:1137px;top:139.8px" width="15" height="15" viewBox="0 0 16 16" fill="none" stroke="#fbfbfe" stroke-width="1.300"><circle cx="8" cy="8" r="7"/><ellipse cx="8" cy="8" rx="3" ry="7"/><path d="M1 8h14"/></svg><div class="t" style="left:1156.5px;top:132.30px;font-size:15px;color:#fbfbfe;letter-spacing:0.05px;">Virtual ERP Boot Cam...</div>
<svg style="left:1332px;top:139.8px" width="15" height="15" viewBox="0 0 16 16" fill="none" stroke="#fbfbfe" stroke-width="1.300"><circle cx="8" cy="8" r="7"/><ellipse cx="8" cy="8" rx="3" ry="7"/><path d="M1 8h14"/></svg><div class="t" style="left:1351.5px;top:132.30px;font-size:15px;color:#fbfbfe;letter-spacing:0.2px;">NAT Dashboard</div>
<svg style="left:1473px;top:139.8px" width="15" height="15" viewBox="0 0 16 16" fill="none" stroke="#fbfbfe" stroke-width="1.300"><circle cx="8" cy="8" r="7"/><ellipse cx="8" cy="8" rx="3" ry="7"/><path d="M1 8h14"/></svg><div class="t" style="left:1492.5px;top:132.30px;font-size:15px;color:#fbfbfe;letter-spacing:0.2px;">Lab 2 due Oct 2.pdf</div>
<svg style="left:1643px;top:139.8px" width="15" height="15" viewBox="0 0 16 16" fill="none" stroke="#fbfbfe" stroke-width="1.300"><circle cx="8" cy="8" r="7"/><ellipse cx="8" cy="8" rx="3" ry="7"/><path d="M1 8h14"/></svg><div class="t" style="left:1662.5px;top:132.30px;font-size:15px;color:#fbfbfe;letter-spacing:0.2px;">Heath</div>
<div class="a" style="left:388px;top:163px;width:1px;height:1341px;background:#3d444d;"></div>
<div class="a" style="left:23.3px;top:182px;width:38.5px;height:38.7px;background:#212830;border-radius:7px;"></div>
<svg style="position:absolute;left:32.8px;top:191.8px" width="19.2" height="19.2" viewBox="0 0 16 16" fill="#9198a1"><path d="m4.177 7.823 2.396-2.396A.25.25 0 0 1 7 5.604v4.792a.25.25 0 0 1-.427.177L4.177 8.177a.25.25 0 0 1 0-.354ZM0 1.75C0 .784.784 0 1.75 0h12.5C15.216 0 16 .784 16 1.75v12.5A1.75 1.75 0 0 1 14.25 16H1.75A1.75 1.75 0 0 1 0 14.25Zm1.75-.25a.25.25 0 0 0-.25.25v12.5c0 .138.112.25.25.25H9.5v-13Zm12.5 13a.25.25 0 0 0 .25-.25V1.75a.25.25 0 0 0-.25-.25H11v13Z"/></svg>
<div class="t" style="left:72.0px;top:188.00px;font-size:17.1px;color:#f0f6fc;font-weight:700;letter-spacing:-0.25px;">Files</div>
<div class="a" style="left:23.3px;top:240.4px;width:299px;height:37.4px;background:#212830;border:1px solid #3d444d;border-radius:7px;"></div>
<div class="a" style="left:60px;top:241px;width:1px;height:36px;background:#3d444d;"></div>
<svg style="position:absolute;left:32px;top:249.3px" width="19.2" height="19.2" viewBox="0 0 16 16" fill="#9198a1"><path d="M9.78 12.78a.75.75 0 0 1-1.06 0L4.47 8.53a.75.75 0 0 1 0-1.06l4.25-4.25a.751.751 0 0 1 1.042.018.751.751 0 0 1 .018 1.042L6.06 8l3.72 3.72a.75.75 0 0 1 0 1.06Z"/></svg>
<svg style="position:absolute;left:75.8px;top:251.5px" width="19.2" height="19.2" viewBox="0 0 16 16" fill="#9198a1"><path d="M9.5 3.25a2.25 2.25 0 1 1 3 2.122V6A2.5 2.5 0 0 1 10 8.5H6a1 1 0 0 0-1 1v1.128a2.251 2.251 0 1 1-1.5 0V5.372a2.25 2.25 0 1 1 1.5 0v1.836A2.493 2.493 0 0 1 6 7h4a1 1 0 0 0 1-1v-.628A2.25 2.25 0 0 1 9.5 3.25Zm-6 0a.75.75 0 1 0 1.5 0 .75.75 0 0 0-1.5 0Zm8.25-.75a.75.75 0 1 0 0 1.5.75.75 0 0 0 0-1.5ZM4.25 12a.75.75 0 1 0 0 1.5.75.75 0 0 0 0-1.5Z"/></svg>
<div class="t" style="left:104.6px;top:246.20px;font-size:16.8px;color:#f0f6fc;letter-spacing:-0.27px;">02499f5</div>
<svg style="position:absolute;left:286.5px;top:248.8px" width="19.2" height="19.2" viewBox="0 0 16 16" fill="#9198a1"><path d="m4.427 7.427 3.396 3.396a.25.25 0 0 0 .354 0l3.396-3.396A.25.25 0 0 0 11.396 7H4.604a.25.25 0 0 0-.177.427Z"/></svg>
<div class="a" style="left:330px;top:240.4px;width:39px;height:37.4px;background:#212830;border:1px solid #3d444d;border-radius:7px;"></div>
<svg style="position:absolute;left:340px;top:249.3px" width="19.2" height="19.2" viewBox="0 0 16 16" fill="#9198a1"><path d="M10.68 11.74a6 6 0 0 1-7.922-8.982 6 6 0 0 1 8.982 7.922l3.04 3.04a.749.749 0 0 1-.326 1.275.749.749 0 0 1-.734-.215ZM11.5 7a4.499 4.499 0 1 0-8.997 0A4.499 4.499 0 0 0 11.5 7Z"/></svg>
<div class="a" style="left:23.3px;top:288.3px;width:345.7px;height:37.6px;background:#0d1117;border:1px solid #3d444d;border-radius:7px;"></div>
<svg style="position:absolute;left:33.5px;top:299.7px" width="19.2" height="19.2" viewBox="0 0 16 16" fill="#9198a1"><path d="M10.68 11.74a6 6 0 0 1-7.922-8.982 6 6 0 0 1 8.982 7.922l3.04 3.04a.749.749 0 0 1-.326 1.275.749.749 0 0 1-.734-.215ZM11.5 7a4.499 4.499 0 1 0-8.997 0A4.499 4.499 0 0 0 11.5 7Z"/></svg>
<div class="t" style="left:62.5px;top:293.80px;font-size:16.8px;color:#9198a1;letter-spacing:0.13px;">Go to file</div>
<div class="a" style="left:338.5px;top:297px;width:19.5px;height:22.8px;background:#151b23;border:1px solid #3d444d;border-radius:5px;"></div>
<div class="t" style="left:338.5px;top:294.00px;font-size:13.5px;color:#f0f6fc;width:19.5px;text-align:center;font-family:'Liberation Mono',monospace;">t</div>
<svg style="position:absolute;left:23.8px;top:351.0px" width="18" height="18" viewBox="0 0 16 16" fill="#9198a1"><path d="M6.22 3.22a.75.75 0 0 1 1.06 0l4.25 4.25a.75.75 0 0 1 0 1.06l-4.25 4.25a.751.751 0 0 1-1.042-.018.751.751 0 0 1-.018-1.042L9.94 8 6.22 4.28a.75.75 0 0 1 0-1.06Z"/></svg>
<svg style="position:absolute;left:51.7px;top:350.4px" width="19.2" height="19.2" viewBox="0 0 16 16" fill="#9198a1"><path d="M1.75 1A1.75 1.75 0 0 0 0 2.75v10.5C0 14.216.784 15 1.75 15h12.5A1.75 1.75 0 0 0 16 13.25v-8.5A1.75 1.75 0 0 0 14.25 3H7.5a.25.25 0 0 1-.2-.1l-.9-1.2C6.07 1.26 5.55 1 5 1H1.75Z"/></svg>
<div class="t" style="left:80.9px;top:346.40px;font-size:16.8px;color:#f0f6fc;letter-spacing:-0.1px;">.codecov</div>
<svg style="position:absolute;left:23.8px;top:389.4px" width="18" height="18" viewBox="0 0 16 16" fill="#9198a1"><path d="M6.22 3.22a.75.75 0 0 1 1.06 0l4.25 4.25a.75.75 0 0 1 0 1.06l-4.25 4.25a.751.751 0 0 1-1.042-.018.751.751 0 0 1-.018-1.042L9.94 8 6.22 4.28a.75.75 0 0 1 0-1.06Z"/></svg>
<svg style="position:absolute;left:51.7px;top:388.79999999999995px" width="19.2" height="19.2" viewBox="0 0 16 16" fill="#9198a1"><path d="M1.75 1A1.75 1.75 0 0 0 0 2.75v10.5C0 14.216.784 15 1.75 15h12.5A1.75 1.75 0 0 0 16 13.25v-8.5A1.75 1.75 0 0 0 14.25 3H7.5a.25.25 0 0 1-.2-.1l-.9-1.2C6.07 1.26 5.55 1 5 1H1.75Z"/></svg>
<div class="t" style="left:80.9px;top:384.80px;font-size:16.8px;color:#f0f6fc;letter-spacing:-0.1px;">.devcontainer</div>
<svg style="position:absolute;left:23.8px;top:427.8px" width="18" height="18" viewBox="0 0 16 16" fill="#9198a1"><path d="M6.22 3.22a.75.75 0 0 1 1.06 0l4.25 4.25a.75.75 0 0 1 0 1.06l-4.25 4.25a.751.751 0 0 1-1.042-.018.751.751 0 0 1-.018-1.042L9.94 8 6.22 4.28a.75.75 0 0 1 0-1.06Z"/></svg>
<svg style="position:absolute;left:51.7px;top:427.2px" width="19.2" height="19.2" viewBox="0 0 16 16" fill="#9198a1"><path d="M1.75 1A1.75 1.75 0 0 0 0 2.75v10.5C0 14.216.784 15 1.75 15h12.5A1.75 1.75 0 0 0 16 13.25v-8.5A1.75 1.75 0 0 0 14.25 3H7.5a.25.25 0 0 1-.2-.1l-.9-1.2C6.07 1.26 5.55 1 5 1H1.75Z"/></svg>
<div class="t" style="left:80.9px;top:423.20px;font-size:16.8px;color:#f0f6fc;letter-spacing:-0.1px;">.github</div>
<svg style="position:absolute;left:23.8px;top:466.2px" width="18" height="18" viewBox="0 0 16 16" fill="#9198a1"><path d="M6.22 3.22a.75.75 0 0 1 1.06 0l4.25 4.25a.75.75 0 0 1 0 1.06l-4.25 4.25a.751.751 0 0 1-1.042-.018.751.751 0 0 1-.018-1.042L9.94 8 6.22 4.28a.75.75 0 0 1 0-1.06Z"/></svg>
<svg style="position:absolute;left:51.7px;top:465.59999999999997px" width="19.2" height="19.2" viewBox="0 0 16 16" fill="#9198a1"><path d="M1.75 1A1.75 1.75 0 0 0 0 2.75v10.5C0 14.216.784 15 1.75 15h12.5A1.75 1.75 0 0 0 16 13.25v-8.5A1.75 1.75 0 0 0 14.25 3H7.5a.25.25 0 0 1-.2-.1l-.9-1.2C6.07 1.26 5.55 1 5 1H1.75Z"/></svg>
<div class="t" style="left:80.9px;top:461.60px;font-size:16.8px;color:#f0f6fc;letter-spacing:-0.1px;">apps</div>
<svg style="position:absolute;left:23.8px;top:504.6px" width="18" height="18" viewBox="0 0 16 16" fill="#9198a1"><path d="M6.22 3.22a.75.75 0 0 1 1.06 0l4.25 4.25a.75.75 0 0 1 0 1.06l-4.25 4.25a.751.751 0 0 1-1.042-.018.751.751 0 0 1-.018-1.042L9.94 8 6.22 4.28a.75.75 0 0 1 0-1.06Z"/></svg>
<svg style="position:absolute;left:51.7px;top:504.0px" width="19.2" height="19.2" viewBox="0 0 16 16" fill="#9198a1"><path d="M1.75 1A1.75 1.75 0 0 0 0 2.75v10.5C0 14.216.784 15 1.75 15h12.5A1.75 1.75 0 0 0 16 13.25v-8.5A1.75 1.75 0 0 0 14.25 3H7.5a.25.25 0 0 1-.2-.1l-.9-1.2C6.07 1.26 5.55 1 5 1H1.75Z"/></svg>
<div class="t" style="left:80.9px;top:500.00px;font-size:16.8px;color:#f0f6fc;letter-spacing:-0.1px;">backend</div>
<svg style="position:absolute;left:23.8px;top:543.0px" width="18" height="18" viewBox="0 0 16 16" fill="#9198a1"><path d="M6.22 3.22a.75.75 0 0 1 1.06 0l4.25 4.25a.75.75 0 0 1 0 1.06l-4.25 4.25a.751.751 0 0 1-1.042-.018.751.751 0 0 1-.018-1.042L9.94 8 6.22 4.28a.75.75 0 0 1 0-1.06Z"/></svg>
<svg style="position:absolute;left:51.7px;top:542.4px" width="19.2" height="19.2" viewBox="0 0 16 16" fill="#9198a1"><path d="M1.75 1A1.75 1.75 0 0 0 0 2.75v10.5C0 14.216.784 15 1.75 15h12.5A1.75 1.75 0 0 0 16 13.25v-8.5A1.75 1.75 0 0 0 14.25 3H7.5a.25.25 0 0 1-.2-.1l-.9-1.2C6.07 1.26 5.55 1 5 1H1.75Z"/></svg>
<div class="t" style="left:80.9px;top:538.40px;font-size:16.8px;color:#f0f6fc;letter-spacing:-0.1px;">benchmark</div>
<svg style="position:absolute;left:23.8px;top:581.4px" width="18" height="18" viewBox="0 0 16 16" fill="#9198a1"><path d="M6.22 3.22a.75.75 0 0 1 1.06 0l4.25 4.25a.75.75 0 0 1 0 1.06l-4.25 4.25a.751.751 0 0 1-1.042-.018.751.751 0 0 1-.018-1.042L9.94 8 6.22 4.28a.75.75 0 0 1 0-1.06Z"/></svg>
<svg style="position:absolute;left:51.7px;top:580.8px" width="19.2" height="19.2" viewBox="0 0 16 16" fill="#9198a1"><path d="M1.75 1A1.75 1.75 0 0 0 0 2.75v10.5C0 14.216.784 15 1.75 15h12.5A1.75 1.75 0 0 0 16 13.25v-8.5A1.75 1.75 0 0 0 14.25 3H7.5a.25.25 0 0 1-.2-.1l-.9-1.2C6.07 1.26 5.55 1 5 1H1.75Z"/></svg>
<div class="t" style="left:80.9px;top:576.80px;font-size:16.8px;color:#f0f6fc;letter-spacing:-0.1px;">cmd</div>
<svg style="position:absolute;left:23.8px;top:619.8px" width="18" height="18" viewBox="0 0 16 16" fill="#9198a1"><path d="M6.22 3.22a.75.75 0 0 1 1.06 0l4.25 4.25a.75.75 0 0 1 0 1.06l-4.25 4.25a.751.751 0 0 1-1.042-.018.751.751 0 0 1-.018-1.042L9.94 8 6.22 4.28a.75.75 0 0 1 0-1.06Z"/></svg>
<svg style="position:absolute;left:51.7px;top:619.1999999999999px" width="19.2" height="19.2" viewBox="0 0 16 16" fill="#9198a1"><path d="M1.75 1A1.75 1.75 0 0 0 0 2.75v10.5C0 14.216.784 15 1.75 15h12.5A1.75 1.75 0 0 0 16 13.25v-8.5A1.75 1.75 0 0 0 14.25 3H7.5a.25.25 0 0 1-.2-.1l-.9-1.2C6.07 1.26 5.55 1 5 1H1.75Z"/></svg>
<div class="t" style="left:80.9px;top:615.20px;font-size:16.8px;color:#f0f6fc;letter-spacing:-0.1px;">console</div>
<svg style="position:absolute;left:23.8px;top:658.2px" width="18" height="18" viewBox="0 0 16 16" fill="#9198a1"><path d="M6.22 3.22a.75.75 0 0 1 1.06 0l4.25 4.25a.75.75 0 0 1 0 1.06l-4.25 4.25a.751.751 0 0 1-1.042-.018.751.751 0 0 1-.018-1.042L9.94 8 6.22 4.28a.75.75 0 0 1 0-1.06Z"/></svg>
<svg style="position:absolute;left:51.7px;top:657.6px" width="19.2" height="19.2" viewBox="0 0 16 16" fill="#9198a1"><path d="M1.75 1A1.75 1.75 0 0 0 0 2.75v10.5C0 14.216.784 15 1.75 15h12.5A1.75 1.75 0 0 0 16 13.25v-8.5A1.75 1.75 0 0 0 14.25 3H7.5a.25.25 0 0 1-.2-.1l-.9-1.2C6.07 1.26 5.55 1 5 1H1.75Z"/></svg>
<div class="t" style="left:80.9px;top:653.60px;font-size:16.8px;color:#f0f6fc;letter-spacing:-0.1px;">docs</div>
<svg style="position:absolute;left:23.900000000000002px;top:696.5999999999999px" width="18" height="18" viewBox="0 0 16 16" fill="#9198a1"><path d="M12.78 5.22a.749.749 0 0 1 0 1.06l-4.25 4.25a.749.749 0 0 1-1.06 0L3.22 6.28a.749.749 0 1 1 1.06-1.06L8 8.939l3.72-3.719a.749.749 0 0 1 1.06 0Z"/></svg>
<svg style="position:absolute;left:51.7px;top:695.9999999999999px" width="19.2" height="19.2" viewBox="0 0 16 16" fill="#9198a1"><path d="M.513 1.513A1.75 1.75 0 0 1 1.75 1h3.5c.55 0 1.07.26 1.4.7l.9 1.2a.25.25 0 0 0 .2.1H13a1 1 0 0 1 1 1v.5H2.75a.75.75 0 0 0 0 1.5h11.978a1 1 0 0 1 .994 1.117L15 13.25A1.75 1.75 0 0 1 13.25 15H1.75A1.75 1.75 0 0 1 0 13.25V2.75c0-.464.184-.91.513-1.237Z"/></svg>
<div class="t" style="left:80.9px;top:692.00px;font-size:16.8px;color:#f0f6fc;letter-spacing:-0.1px;">internal</div>
<svg style="position:absolute;left:33.400000000000006px;top:735.0px" width="18" height="18" viewBox="0 0 16 16" fill="#9198a1"><path d="M6.22 3.22a.75.75 0 0 1 1.06 0l4.25 4.25a.75.75 0 0 1 0 1.06l-4.25 4.25a.751.751 0 0 1-1.042-.018.751.751 0 0 1-.018-1.042L9.94 8 6.22 4.28a.75.75 0 0 1 0-1.06Z"/></svg>
<svg style="position:absolute;left:61.300000000000004px;top:734.4px" width="19.2" height="19.2" viewBox="0 0 16 16" fill="#9198a1"><path d="M1.75 1A1.75 1.75 0 0 0 0 2.75v10.5C0 14.216.784 15 1.75 15h12.5A1.75 1.75 0 0 0 16 13.25v-8.5A1.75 1.75 0 0 0 14.25 3H7.5a.25.25 0 0 1-.2-.1l-.9-1.2C6.07 1.26 5.55 1 5 1H1.75Z"/></svg>
<div class="t" style="left:90.5px;top:730.40px;font-size:16.8px;color:#f0f6fc;letter-spacing:-0.1px;">actions</div>
<svg style="position:absolute;left:33.400000000000006px;top:773.4px" width="18" height="18" viewBox="0 0 16 16" fill="#9198a1"><path d="M6.22 3.22a.75.75 0 0 1 1.06 0l4.25 4.25a.75.75 0 0 1 0 1.06l-4.25 4.25a.751.751 0 0 1-1.042-.018.751.751 0 0 1-.018-1.042L9.94 8 6.22 4.28a.75.75 0 0 1 0-1.06Z"/></svg>
<svg style="position:absolute;left:61.300000000000004px;top:772.8px" width="19.2" height="19.2" viewBox="0 0 16 16" fill="#9198a1"><path d="M1.75 1A1.75 1.75 0 0 0 0 2.75v10.5C0 14.216.784 15 1.75 15h12.5A1.75 1.75 0 0 0 16 13.25v-8.5A1.75 1.75 0 0 0 14.25 3H7.5a.25.25 0 0 1-.2-.1l-.9-1.2C6.07 1.26 5.55 1 5 1H1.75Z"/></svg>
<div class="t" style="left:90.5px;top:768.80px;font-size:16.8px;color:#f0f6fc;letter-spacing:-0.1px;">activity</div>
<svg style="position:absolute;left:33.400000000000006px;top:811.8px" width="18" height="18" viewBox="0 0 16 16" fill="#9198a1"><path d="M6.22 3.22a.75.75 0 0 1 1.06 0l4.25 4.25a.75.75 0 0 1 0 1.06l-4.25 4.25a.751.751 0 0 1-1.042-.018.751.751 0 0 1-.018-1.042L9.94 8 6.22 4.28a.75.75 0 0 1 0-1.06Z"/></svg>
<svg style="position:absolute;left:61.300000000000004px;top:811.1999999999999px" width="19.2" height="19.2" viewBox="0 0 16 16" fill="#9198a1"><path d="M1.75 1A1.75 1.75 0 0 0 0 2.75v10.5C0 14.216.784 15 1.75 15h12.5A1.75 1.75 0 0 0 16 13.25v-8.5A1.75 1.75 0 0 0 14.25 3H7.5a.25.25 0 0 1-.2-.1l-.9-1.2C6.07 1.26 5.55 1 5 1H1.75Z"/></svg>
<div class="t" style="left:90.5px;top:807.20px;font-size:16.8px;color:#f0f6fc;letter-spacing:-0.1px;">admin</div>
<svg style="position:absolute;left:33.400000000000006px;top:850.2px" width="18" height="18" viewBox="0 0 16 16" fill="#9198a1"><path d="M6.22 3.22a.75.75 0 0 1 1.06 0l4.25 4.25a.75.75 0 0 1 0 1.06l-4.25 4.25a.751.751 0 0 1-1.042-.018.751.751 0 0 1-.018-1.042L9.94 8 6.22 4.28a.75.75 0 0 1 0-1.06Z"/></svg>
<svg style="position:absolute;left:61.300000000000004px;top:849.6px" width="19.2" height="19.2" viewBox="0 0 16 16" fill="#9198a1"><path d="M1.75 1A1.75 1.75 0 0 0 0 2.75v10.5C0 14.216.784 15 1.75 15h12.5A1.75 1.75 0 0 0 16 13.25v-8.5A1.75 1.75 0 0 0 14.25 3H7.5a.25.25 0 0 1-.2-.1l-.9-1.2C6.07 1.26 5.55 1 5 1H1.75Z"/></svg>
<div class="t" style="left:90.5px;top:845.60px;font-size:16.8px;color:#f0f6fc;letter-spacing:-0.1px;">api</div>
<svg style="position:absolute;left:33.400000000000006px;top:888.6px" width="18" height="18" viewBox="0 0 16 16" fill="#9198a1"><path d="M6.22 3.22a.75.75 0 0 1 1.06 0l4.25 4.25a.75.75 0 0 1 0 1.06l-4.25 4.25a.751.751 0 0 1-1.042-.018.751.751 0 0 1-.018-1.042L9.94 8 6.22 4.28a.75.75 0 0 1 0-1.06Z"/></svg>
<svg style="position:absolute;left:61.300000000000004px;top:888.0px" width="19.2" height="19.2" viewBox="0 0 16 16" fill="#9198a1"><path d="M1.75 1A1.75 1.75 0 0 0 0 2.75v10.5C0 14.216.784 15 1.75 15h12.5A1.75 1.75 0 0 0 16 13.25v-8.5A1.75 1.75 0 0 0 14.25 3H7.5a.25.25 0 0 1-.2-.1l-.9-1.2C6.07 1.26 5.55 1 5 1H1.75Z"/></svg>
<div class="t" style="left:90.5px;top:884.00px;font-size:16.8px;color:#f0f6fc;letter-spacing:-0.1px;">auth</div>
<svg style="position:absolute;left:33.400000000000006px;top:927.0px" width="18" height="18" viewBox="0 0 16 16" fill="#9198a1"><path d="M6.22 3.22a.75.75 0 0 1 1.06 0l4.25 4.25a.75.75 0 0 1 0 1.06l-4.25 4.25a.751.751 0 0 1-1.042-.018.751.751 0 0 1-.018-1.042L9.94 8 6.22 4.28a.75.75 0 0 1 0-1.06Z"/></svg>
<svg style="position:absolute;left:61.300000000000004px;top:926.4px" width="19.2" height="19.2" viewBox="0 0 16 16" fill="#9198a1"><path d="M1.75 1A1.75 1.75 0 0 0 0 2.75v10.5C0 14.216.784 15 1.75 15h12.5A1.75 1.75 0 0 0 16 13.25v-8.5A1.75 1.75 0 0 0 14.25 3H7.5a.25.25 0 0 1-.2-.1l-.9-1.2C6.07 1.26 5.55 1 5 1H1.75Z"/></svg>
<div class="t" style="left:90.5px;top:922.40px;font-size:16.8px;color:#f0f6fc;letter-spacing:-0.1px;">auth_request</div>
<svg style="position:absolute;left:33.5px;top:965.4px" width="18" height="18" viewBox="0 0 16 16" fill="#9198a1"><path d="M12.78 5.22a.749.749 0 0 1 0 1.06l-4.25 4.25a.749.749 0 0 1-1.06 0L3.22 6.28a.749.749 0 1 1 1.06-1.06L8 8.939l3.72-3.719a.749.749 0 0 1 1.06 0Z"/></svg>
<svg style="position:absolute;left:61.300000000000004px;top:964.8px" width="19.2" height="19.2" viewBox="0 0 16 16" fill="#9198a1"><path d="M.513 1.513A1.75 1.75 0 0 1 1.75 1h3.5c.55 0 1.07.26 1.4.7l.9 1.2a.25.25 0 0 0 .2.1H13a1 1 0 0 1 1 1v.5H2.75a.75.75 0 0 0 0 1.5h11.978a1 1 0 0 1 .994 1.117L15 13.25A1.75 1.75 0 0 1 13.25 15H1.75A1.75 1.75 0 0 1 0 13.25V2.75c0-.464.184-.91.513-1.237Z"/></svg>
<div class="t" style="left:90.5px;top:960.80px;font-size:16.8px;color:#f0f6fc;letter-spacing:-0.1px;">authz</div>
<svg style="position:absolute;left:43.099999999999994px;top:1003.8px" width="18" height="18" viewBox="0 0 16 16" fill="#9198a1"><path d="M12.78 5.22a.749.749 0 0 1 0 1.06l-4.25 4.25a.749.749 0 0 1-1.06 0L3.22 6.28a.749.749 0 1 1 1.06-1.06L8 8.939l3.72-3.719a.749.749 0 0 1 1.06 0Z"/></svg>
<svg style="position:absolute;left:70.9px;top:1003.1999999999999px" width="19.2" height="19.2" viewBox="0 0 16 16" fill="#9198a1"><path d="M.513 1.513A1.75 1.75 0 0 1 1.75 1h3.5c.55 0 1.07.26 1.4.7l.9 1.2a.25.25 0 0 0 .2.1H13a1 1 0 0 1 1 1v.5H2.75a.75.75 0 0 0 0 1.5h11.978a1 1 0 0 1 .994 1.117L15 13.25A1.75 1.75 0 0 1 13.25 15H1.75A1.75 1.75 0 0 1 0 13.25V2.75c0-.464.184-.91.513-1.237Z"/></svg>
<div class="t" style="left:100.10000000000001px;top:999.20px;font-size:16.8px;color:#f0f6fc;letter-spacing:-0.1px;">repository</div>
<svg style="position:absolute;left:52.699999999999996px;top:1042.1999999999998px" width="18" height="18" viewBox="0 0 16 16" fill="#9198a1"><path d="M12.78 5.22a.749.749 0 0 1 0 1.06l-4.25 4.25a.749.749 0 0 1-1.06 0L3.22 6.28a.749.749 0 1 1 1.06-1.06L8 8.939l3.72-3.719a.749.749 0 0 1 1.06 0Z"/></svg>
<svg style="position:absolute;left:80.5px;top:1041.6px" width="19.2" height="19.2" viewBox="0 0 16 16" fill="#9198a1"><path d="M.513 1.513A1.75 1.75 0 0 1 1.75 1h3.5c.55 0 1.07.26 1.4.7l.9 1.2a.25.25 0 0 0 .2.1H13a1 1 0 0 1 1 1v.5H2.75a.75.75 0 0 0 0 1.5h11.978a1 1 0 0 1 .994 1.117L15 13.25A1.75 1.75 0 0 1 13.25 15H1.75A1.75 1.75 0 0 1 0 13.25V2.75c0-.464.184-.91.513-1.237Z"/></svg>
<div class="t" style="left:109.7px;top:1037.60px;font-size:16.8px;color:#f0f6fc;letter-spacing:-0.1px;">eventsourcing</div>
<svg style="position:absolute;left:62.3px;top:1080.6px" width="18" height="18" viewBox="0 0 16 16" fill="#9198a1"><path d="M12.78 5.22a.749.749 0 0 1 0 1.06l-4.25 4.25a.749.749 0 0 1-1.06 0L3.22 6.28a.749.749 0 1 1 1.06-1.06L8 8.939l3.72-3.719a.749.749 0 0 1 1.06 0Z"/></svg>
<svg style="position:absolute;left:90.1px;top:1080.0px" width="19.2" height="19.2" viewBox="0 0 16 16" fill="#9198a1"><path d="M.513 1.513A1.75 1.75 0 0 1 1.75 1h3.5c.55 0 1.07.26 1.4.7l.9 1.2a.25.25 0 0 0 .2.1H13a1 1 0 0 1 1 1v.5H2.75a.75.75 0 0 0 0 1.5h11.978a1 1 0 0 1 .994 1.117L15 13.25A1.75 1.75 0 0 1 13.25 15H1.75A1.75 1.75 0 0 1 0 13.25V2.75c0-.464.184-.91.513-1.237Z"/></svg>
<div class="t" style="left:119.30000000000001px;top:1076.00px;font-size:16.8px;color:#f0f6fc;letter-spacing:-0.1px;">eventstore</div>
<div class="a" style="left:23px;top:1109px;width:346px;height:38px;background:#1e242d;border-radius:7px;"></div>
<div class="a" style="left:14px;top:1113px;width:4.5px;height:29px;background:#4493f8;border-radius:2.5px;"></div>
<svg style="position:absolute;left:100.2px;top:1118.4px" width="19.2" height="19.2" viewBox="0 0 16 16" fill="#9198a1"><path d="M2 1.75C2 .784 2.784 0 3.75 0h6.586c.464 0 .909.184 1.237.513l2.914 2.914c.329.328.513.773.513 1.237v9.586A1.75 1.75 0 0 1 13.25 16h-9.5A1.75 1.75 0 0 1 2 14.25Zm1.75-.25a.25.25 0 0 0-.25.25v12.5c0 .138.112.25.25.25h9.5a.25.25 0 0 0 .25-.25V6h-2.75A1.75 1.75 0 0 1 9 4.25V1.5Zm6.75.062V4.25c0 .138.112.25.25.25h2.688l-.011-.013-2.914-2.914-.013-.011Z"/></svg>
<div class="t" style="left:128.9px;top:1114.40px;font-size:16.8px;color:#f0f6fc;letter-spacing:-0.1px;">token_verifier.go</div>
<svg style="position:absolute;left:100.2px;top:1156.8000000000002px" width="19.2" height="19.2" viewBox="0 0 16 16" fill="#9198a1"><path d="M2 1.75C2 .784 2.784 0 3.75 0h6.586c.464 0 .909.184 1.237.513l2.914 2.914c.329.328.513.773.513 1.237v9.586A1.75 1.75 0 0 1 13.25 16h-9.5A1.75 1.75 0 0 1 2 14.25Zm1.75-.25a.25.25 0 0 0-.25.25v12.5c0 .138.112.25.25.25h9.5a.25.25 0 0 0 .25-.25V6h-2.75A1.75 1.75 0 0 1 9 4.25V1.5Zm6.75.062V4.25c0 .138.112.25.25.25h2.688l-.011-.013-2.914-2.914-.013-.011Z"/></svg>
<div class="t" style="left:128.9px;top:1152.80px;font-size:16.8px;color:#f0f6fc;letter-spacing:-0.1px;">user_membership.go</div>
<svg style="position:absolute;left:62.2px;top:1195.8px" width="18" height="18" viewBox="0 0 16 16" fill="#9198a1"><path d="M6.22 3.22a.75.75 0 0 1 1.06 0l4.25 4.25a.75.75 0 0 1 0 1.06l-4.25 4.25a.751.751 0 0 1-1.042-.018.751.751 0 0 1-.018-1.042L9.94 8 6.22 4.28a.75.75 0 0 1 0-1.06Z"/></svg>
<svg style="position:absolute;left:90.1px;top:1195.2px" width="19.2" height="19.2" viewBox="0 0 16 16" fill="#9198a1"><path d="M1.75 1A1.75 1.75 0 0 0 0 2.75v10.5C0 14.216.784 15 1.75 15h12.5A1.75 1.75 0 0 0 16 13.25v-8.5A1.75 1.75 0 0 0 14.25 3H7.5a.25.25 0 0 1-.2-.1l-.9-1.2C6.07 1.26 5.55 1 5 1H1.75Z"/></svg>
<div class="t" style="left:119.30000000000001px;top:1191.20px;font-size:16.8px;color:#f0f6fc;letter-spacing:-0.1px;">view</div>
<svg style="position:absolute;left:90.6px;top:1233.6px" width="19.2" height="19.2" viewBox="0 0 16 16" fill="#9198a1"><path d="M2 1.75C2 .784 2.784 0 3.75 0h6.586c.464 0 .909.184 1.237.513l2.914 2.914c.329.328.513.773.513 1.237v9.586A1.75 1.75 0 0 1 13.25 16h-9.5A1.75 1.75 0 0 1 2 14.25Zm1.75-.25a.25.25 0 0 0-.25.25v12.5c0 .138.112.25.25.25h9.5a.25.25 0 0 0 .25-.25V6h-2.75A1.75 1.75 0 0 1 9 4.25V1.5Zm6.75.062V4.25c0 .138.112.25.25.25h2.688l-.011-.013-2.914-2.914-.013-.011Z"/></svg>
<div class="t" style="left:119.30000000000001px;top:1229.60px;font-size:16.8px;color:#f0f6fc;letter-spacing:-0.1px;">repository.go</div>
<svg style="position:absolute;left:81.0px;top:1272.0px" width="19.2" height="19.2" viewBox="0 0 16 16" fill="#9198a1"><path d="M2 1.75C2 .784 2.784 0 3.75 0h6.586c.464 0 .909.184 1.237.513l2.914 2.914c.329.328.513.773.513 1.237v9.586A1.75 1.75 0 0 1 13.25 16h-9.5A1.75 1.75 0 0 1 2 14.25Zm1.75-.25a.25.25 0 0 0-.25.25v12.5c0 .138.112.25.25.25h9.5a.25.25 0 0 0 .25-.25V6h-2.75A1.75 1.75 0 0 1 9 4.25V1.5Zm6.75.062V4.25c0 .138.112.25.25.25h2.688l-.011-.013-2.914-2.914-.013-.011Z"/></svg>
<div class="t" style="left:109.7px;top:1268.00px;font-size:16.8px;color:#f0f6fc;letter-spacing:-0.1px;">repository.go</div>
<svg style="position:absolute;left:81.0px;top:1310.4px" width="19.2" height="19.2" viewBox="0 0 16 16" fill="#9198a1"><path d="M2 1.75C2 .784 2.784 0 3.75 0h6.586c.464 0 .909.184 1.237.513l2.914 2.914c.329.328.513.773.513 1.237v9.586A1.75 1.75 0 0 1 13.25 16h-9.5A1.75 1.75 0 0 1 2 14.25Zm1.75-.25a.25.25 0 0 0-.25.25v12.5c0 .138.112.25.25.25h9.5a.25.25 0 0 0 .25-.25V6h-2.75A1.75 1.75 0 0 1 9 4.25V1.5Zm6.75.062V4.25c0 .138.112.25.25.25h2.688l-.011-.013-2.914-2.914-.013-.011Z"/></svg>
<div class="t" style="left:109.7px;top:1306.40px;font-size:16.8px;color:#f0f6fc;letter-spacing:-0.1px;">token_verifier.go</div>
<svg style="position:absolute;left:81.0px;top:1348.8000000000002px" width="19.2" height="19.2" viewBox="0 0 16 16" fill="#9198a1"><path d="M2 1.75C2 .784 2.784 0 3.75 0h6.586c.464 0 .909.184 1.237.513l2.914 2.914c.329.328.513.773.513 1.237v9.586A1.75 1.75 0 0 1 13.25 16h-9.5A1.75 1.75 0 0 1 2 14.25Zm1.75-.25a.25.25 0 0 0-.25.25v12.5c0 .138.112.25.25.25h9.5a.25.25 0 0 0 .25-.25V6h-2.75A1.75 1.75 0 0 1 9 4.25V1.5Zm6.75.062V4.25c0 .138.112.25.25.25h2.688l-.011-.013-2.914-2.914-.013-.011Z"/></svg>
<div class="t" style="left:109.7px;top:1344.80px;font-size:16.8px;color:#f0f6fc;letter-spacing:-0.1px;">user_membership.go</div>
<svg style="position:absolute;left:71.4px;top:1387.2px" width="19.2" height="19.2" viewBox="0 0 16 16" fill="#9198a1"><path d="M2 1.75C2 .784 2.784 0 3.75 0h6.586c.464 0 .909.184 1.237.513l2.914 2.914c.329.328.513.773.513 1.237v9.586A1.75 1.75 0 0 1 13.25 16h-9.5A1.75 1.75 0 0 1 2 14.25Zm1.75-.25a.25.25 0 0 0-.25.25v12.5c0 .138.112.25.25.25h9.5a.25.25 0 0 0 .25-.25V6h-2.75A1.75 1.75 0 0 1 9 4.25V1.5Zm6.75.062V4.25c0 .138.112.25.25.25h2.688l-.011-.013-2.914-2.914-.013-.011Z"/></svg>
<div class="t" style="left:100.10000000000001px;top:1383.20px;font-size:16.8px;color:#f0f6fc;letter-spacing:-0.1px;">authz.go</div>
<svg style="position:absolute;left:33.400000000000006px;top:1426.2px" width="18" height="18" viewBox="0 0 16 16" fill="#9198a1"><path d="M6.22 3.22a.75.75 0 0 1 1.06 0l4.25 4.25a.75.75 0 0 1 0 1.06l-4.25 4.25a.751.751 0 0 1-1.042-.018.751.751 0 0 1-.018-1.042L9.94 8 6.22 4.28a.75.75 0 0 1 0-1.06Z"/></svg>
<svg style="position:absolute;left:61.300000000000004px;top:1425.6000000000001px" width="19.2" height="19.2" viewBox="0 0 16 16" fill="#9198a1"><path d="M1.75 1A1.75 1.75 0 0 0 0 2.75v10.5C0 14.216.784 15 1.75 15h12.5A1.75 1.75 0 0 0 16 13.25v-8.5A1.75 1.75 0 0 0 14.25 3H7.5a.25.25 0 0 1-.2-.1l-.9-1.2C6.07 1.26 5.55 1 5 1H1.75Z"/></svg>
<div class="t" style="left:90.5px;top:1421.60px;font-size:16.8px;color:#f0f6fc;letter-spacing:-0.1px;">cache</div>
<svg style="position:absolute;left:33.400000000000006px;top:1464.6px" width="18" height="18" viewBox="0 0 16 16" fill="#9198a1"><path d="M6.22 3.22a.75.75 0 0 1 1.06 0l4.25 4.25a.75.75 0 0 1 0 1.06l-4.25 4.25a.751.751 0 0 1-1.042-.018.751.751 0 0 1-.018-1.042L9.94 8 6.22 4.28a.75.75 0 0 1 0-1.06Z"/></svg>
<svg style="position:absolute;left:61.300000000000004px;top:1464.0px" width="19.2" height="19.2" viewBox="0 0 16 16" fill="#9198a1"><path d="M1.75 1A1.75 1.75 0 0 0 0 2.75v10.5C0 14.216.784 15 1.75 15h12.5A1.75 1.75 0 0 0 16 13.25v-8.5A1.75 1.75 0 0 0 14.25 3H7.5a.25.25 0 0 1-.2-.1l-.9-1.2C6.07 1.26 5.55 1 5 1H1.75Z"/></svg>
<div class="t" style="left:90.5px;top:1460.00px;font-size:16.8px;color:#f0f6fc;letter-spacing:-0.1px;">command</div>
<div class="a" style="left:408px;top:163px;width:1825px;height:1400px;background:#0d1117;border:1px solid #3d444d;border-top:none;"></div>
<div class="a" style="left:409px;top:163px;width:1823px;height:53px;background:#151b23;"></div>
<div class="a" style="left:409px;top:216px;width:1823px;height:1px;background:#3d444d;"></div>
<div class="a" style="left:409px;top:217px;width:1823px;height:53px;background:#151b23;"></div>
<div class="a" style="left:409px;top:270px;width:1823px;height:1px;background:#3d444d;"></div>
<div class="a" style="left:409px;top:322px;width:1823px;height:1px;background:#3d444d;"></div>
<div class="t" style="left:428.5px;top:176.00px;font-size:16.8px;color:#4493f8;font-weight:700;letter-spacing:-0.35px;">zitadel</div>
<div class="t" style="left:495.5px;top:176.00px;font-size:16.8px;color:#4493f8;letter-spacing:0.05px;">internal</div>
<div class="t" style="left:567.3px;top:176.00px;font-size:16.8px;color:#4493f8;letter-spacing:0.05px;">authz</div>
<div class="t" style="left:624.5px;top:176.00px;font-size:16.8px;color:#4493f8;letter-spacing:0.05px;">repository</div>
<div class="t" style="left:715.5px;top:176.00px;font-size:16.8px;color:#4493f8;letter-spacing:0.05px;">eventsourcing</div>
<div class="t" style="left:836.3px;top:176.00px;font-size:16.8px;color:#4493f8;letter-spacing:0.05px;">eventstore</div>
<div class="t" style="left:484.2px;top:176.00px;font-size:16.8px;color:#9198a1;">/</div>
<div class="t" style="left:556.2px;top:176.00px;font-size:16.8px;color:#9198a1;">/</div>
<div class="t" style="left:613.7px;top:176.00px;font-size:16.8px;color:#9198a1;">/</div>
<div class="t" style="left:704.7px;top:176.00px;font-size:16.8px;color:#9198a1;">/</div>
<div class="t" style="left:825.2px;top:176.00px;font-size:16.8px;color:#9198a1;">/</div>
<div class="t" style="left:919.2px;top:176.00px;font-size:16.8px;color:#9198a1;">/</div>
<div class="t" style="left:930px;top:176.00px;font-size:16.8px;color:#f0f6fc;font-weight:700;letter-spacing:-0.48px;">token_verifier.go</div>
<svg style="position:absolute;left:2164.5px;top:179.8px" width="19.2" height="19.2" viewBox="0 0 16 16" fill="#9198a1"><path d="M3.47 7.78a.75.75 0 0 1 0-1.06l4.25-4.25a.75.75 0 0 1 1.06 0l4.25 4.25a.751.751 0 0 1-.018 1.042.751.751 0 0 1-1.042.018L9 4.81v7.44a.75.75 0 0 1-1.5 0V4.81L4.53 7.78a.75.75 0 0 1-1.06 0Z"/></svg>
<div class="t" style="left:2189px;top:175.30px;font-size:14.4px;color:#f0f6fc;letter-spacing:-0.35px;">Top</div>
<div class="a" style="left:419px;top:226px;width:149px;height:33.6px;background:#212830;border:1px solid #3d444d;border-radius:7px;"></div>
<div class="a" style="left:490.5px;top:226px;width:77.5px;height:33.6px;background:#010409;border:1px solid #3d444d;border-radius:7px;"></div>
<div class="t" style="left:434.5px;top:229.20px;font-size:16.8px;color:#f0f6fc;letter-spacing:-0.1px;">Code</div>
<div class="t" style="left:506px;top:229.20px;font-size:16.8px;color:#f0f6fc;font-weight:700;letter-spacing:-0.7px;">Blame</div>
<div class="t" style="left:577.5px;top:228.70px;font-size:13.2px;color:#9198a1;font-family:'Liberation Mono',monospace;">362 lines (327 loc) · 13.7 KB</div>
<div class="a" style="left:1993px;top:226px;width:34px;height:34px;background:#212830;border:1px solid #3d444d;border-radius:7px;"></div>
<svg style="position:absolute;left:2000.4px;top:233.5px" width="19.2" height="19.2" viewBox="0 0 16 16" fill="#9198a1"><path d="M7.998 15.035c-4.562 0-7.873-2.914-7.998-3.749V9.338c.085-.628.677-1.686 1.588-2.065.013-.07.024-.143.036-.218.029-.183.06-.384.126-.612-.201-.508-.254-1.084-.254-1.656 0-.87.128-1.769.693-2.484.579-.733 1.494-1.124 2.724-1.261 1.206-.134 2.262.034 2.944.765.05.053.096.108.139.165.044-.057.094-.112.143-.165.682-.731 1.738-.899 2.944-.765 1.23.137 2.145.528 2.724 1.261.566.715.693 1.614.693 2.484 0 .572-.053 1.148-.254 1.656.066.228.098.429.126.612.012.076.024.148.037.218.924.385 1.522 1.471 1.591 2.095v1.872c0 .766-3.351 3.795-8.002 3.795Zm0-1.485c2.28 0 4.584-1.11 5.002-1.433V7.862l-.023-.116c-.49.21-1.075.291-1.727.291-1.146 0-2.059-.327-2.71-.991A3.222 3.222 0 0 1 8 6.303a3.24 3.24 0 0 1-.544.743c-.65.664-1.563.991-2.71.991-.652 0-1.236-.081-1.727-.291l-.023.116v4.255c.419.323 2.722 1.433 5.002 1.433ZM6.762 2.83c-.193-.206-.637-.413-1.682-.297-1.019.113-1.479.404-1.713.7-.247.312-.369.789-.369 1.554 0 .793.129 1.171.308 1.371.162.181.519.379 1.442.379.853 0 1.339-.235 1.638-.54.315-.322.527-.827.617-1.553.117-.935-.037-1.395-.241-1.614Zm4.155-.297c-1.044-.116-1.488.091-1.681.297-.204.219-.359.679-.242 1.614.091.726.303 1.231.618 1.553.299.305.784.54 1.638.54.922 0 1.28-.198 1.442-.379.179-.2.308-.578.308-1.371 0-.765-.123-1.242-.37-1.554-.233-.296-.693-.587-1.713-.7ZM6.25 9.037a.75.75 0 0 1 .75.75v1.501a.75.75 0 0 1-1.5 0V9.787a.75.75 0 0 1 .75-.75Zm4.25.75v1.501a.75.75 0 0 1-1.5 0V9.787a.75.75 0 0 1 1.5 0Z"/></svg>
<div class="a" style="left:2037px;top:226px;width:112px;height:34px;background:#212830;border:1px solid #3d444d;border-radius:7px;"></div>
<div class="a" style="left:2083px;top:227px;width:1px;height:32px;background:#3d444d;"></div>
<div class="a" style="left:2115px;top:227px;width:1px;height:32px;background:#3d444d;"></div>
<div class="t" style="left:2047.6px;top:229.00px;font-size:13.8px;color:#f0f6fc;font-weight:700;letter-spacing:-0.5px;">Raw</div>
<svg style="position:absolute;left:2089.5px;top:233.7px" width="19.2" height="19.2" viewBox="0 0 16 16" fill="#9198a1"><path d="M0 6.75C0 5.784.784 5 1.75 5h1.5a.75.75 0 0 1 0 1.5h-1.5a.25.25 0 0 0-.25.25v7.5c0 .138.112.25.25.25h7.5a.25.25 0 0 0 .25-.25v-1.5a.75.75 0 0 1 1.5 0v1.5A1.75 1.75 0 0 1 9.25 16h-7.5A1.75 1.75 0 0 1 0 14.25ZM5 1.75C5 .784 5.784 0 6.75 0h7.5C15.216 0 16 .784 16 1.75v7.5A1.75 1.75 0 0 1 14.25 11h-7.5A1.75 1.75 0 0 1 5 9.25Zm1.75-.25a.25.25 0 0 0-.25.25v7.5c0 .138.112.25.25.25h7.5a.25.25 0 0 0 .25-.25v-7.5a.25.25 0 0 0-.25-.25Z"/></svg>
<svg style="position:absolute;left:2122.5px;top:233.5px" width="19.2" height="19.2" viewBox="0 0 16 16" fill="#9198a1"><path d="M2.75 14A1.75 1.75 0 0 1 1 12.25v-2.5a.75.75 0 0 1 1.5 0v2.5c0 .138.112.25.25.25h10.5a.25.25 0 0 0 .25-.25v-2.5a.75.75 0 0 1 1.5 0v2.5A1.75 1.75 0 0 1 13.25 14ZM7.25 7.689V2a.75.75 0 0 1 1.5 0v5.689l1.97-1.969a.749.749 0 1 1 1.06 1.06l-3.25 3.25a.749.749 0 0 1-1.06 0L4.22 6.78a.749.749 0 1 1 1.06-1.06l1.97 1.969Z"/></svg>
<div class="a" style="left:2157px;top:226px;width:66px;height:34px;background:#1a2029;border:1px solid #3d444d;border-radius:7px;"></div>
<div class="a" style="left:2190px;top:227px;width:1px;height:32px;background:#3d444d;"></div>
<svg style="position:absolute;left:2165px;top:233.5px" width="19.2" height="19.2" viewBox="0 0 16 16" fill="#656c76"><path d="M11.013 1.427a1.75 1.75 0 0 1 2.474 0l1.086 1.086a1.75 1.75 0 0 1 0 2.474l-8.61 8.61c-.21.21-.47.364-.756.445l-3.251.93a.75.75 0 0 1-.927-.928l.929-3.25c.081-.286.235-.547.445-.758l8.61-8.61Zm.176 4.823L9.75 4.81l-6.286 6.287a.253.253 0 0 0-.064.108l-.558 1.953 1.953-.558a.253.253 0 0 0 .108-.064Zm1.238-3.763a.25.25 0 0 0-.354 0L10.811 3.75l1.439 1.44 1.263-1.263a.25.25 0 0 0 0-.354Z"/></svg>
<svg style="position:absolute;left:2197px;top:234px" width="19.2" height="19.2" viewBox="0 0 16 16" fill="#9198a1"><path d="m4.427 7.427 3.396 3.396a.25.25 0 0 0 .354 0l3.396-3.396A.25.25 0 0 0 11.396 7H4.604a.25.25 0 0 0-.177.427Z"/></svg>
<div class="t" style="left:423.6px;top:283.00px;font-size:14.4px;color:#9198a1;letter-spacing:0.15px;">Older</div>
<div class="a" style="left:471px;top:291.7px;width:9.6px;height:9.6px;background:#3d1300;"></div>
<div class="a" style="left:483px;top:291.7px;width:9.6px;height:9.6px;background:#5a1e02;"></div>
<div class="a" style="left:495px;top:291.7px;width:9.6px;height:9.6px;background:#762d0a;"></div>
<div class="a" style="left:507px;top:291.7px;width:9.6px;height:9.6px;background:#9b4215;"></div>
<div class="a" style="left:519px;top:291.7px;width:9.6px;height:9.6px;background:#bd561d;"></div>
<div class="a" style="left:531px;top:291.7px;width:9.6px;height:9.6px;background:#db6d28;"></div>
<div class="a" style="left:543px;top:291.7px;width:9.6px;height:9.6px;background:#f0883e;"></div>
<div class="a" style="left:555px;top:291.7px;width:9.6px;height:9.6px;background:#ffa657;"></div>
<div class="a" style="left:567px;top:291.7px;width:9.6px;height:9.6px;background:#ffc680;"></div>
<div class="a" style="left:579px;top:291.7px;width:9.6px;height:9.6px;background:#ffdfb6;"></div>
<div class="t" style="left:601px;top:283.00px;font-size:14.4px;color:#9198a1;letter-spacing:0.0px;">Newer</div>
<svg width="0" height="0" style="position:absolute"><defs><clipPath id="cc"><circle cx="11" cy="11" r="11"/></clipPath><symbol id="avA" viewBox="0 0 22 22"><g clip-path="url(#cc)"><rect width="22" height="22" fill="#6f8644"/><rect width="6" height="22" fill="#cfcab2"/><rect x="16.500" width="5.500" height="22" fill="#e9e7dc"/><ellipse cx="12.500" cy="3" rx="8" ry="4.800" fill="#4a6a26"/><ellipse cx="16" cy="7" rx="3" ry="3.500" fill="#5f8030"/><path d="M0 22C.8 14.800 6 13.200 11 13.200S21.200 14.800 22 22z" fill="#14161b"/><rect x="9.400" y="10.500" width="3.200" height="4.300" rx="1.200" fill="#b68262"/><ellipse cx="11" cy="8.300" rx="3.300" ry="4.200" fill="#cb9676"/><path d="M7.500 7.600C7.300 3.300 14.700 3.300 14.500 7.600 13.600 5.500 8.400 5.500 7.500 7.600z" fill="#8b5a33"/><path d="M8.300 10.200c.5 3.200 4.900 3.200 5.400 0-1 1.300-4.400 1.300-5.400 0z" fill="#96694a"/></g></symbol><symbol id="avB" viewBox="0 0 22 22"><g clip-path="url(#cc)"><rect width="22" height="22" fill="#f3f3f3"/><path d="M0 22C.6 15 6 13.600 11 13.600S21.400 15 22 22z" fill="#636366"/><ellipse cx="11" cy="7.600" rx="4" ry="4.900" fill="#dcae96"/><path d="M7.100 8.300c0 7 7.800 7 7.800 0-1 2.500-6.800 2.500-7.800 0z" fill="#a86c4c"/></g></symbol><symbol id="avC" viewBox="0 0 22 22"><g clip-path="url(#cc)"><rect width="22" height="22" fill="#0b0b13"/><path d="M1.200 14.500A10 10 0 0 1 20.800 14.500" fill="none" stroke="#ff2a9a" stroke-width="1.400"/><path d="M5.200 15C4.500 3 17.500 3 16.800 15" fill="none" stroke="#e0208a" stroke-width="1.100"/><path d="M2 22C2.800 15 7 13.300 11 13.300s8.200 1.700 9 8.700z" fill="#25337a"/><ellipse cx="11" cy="8.600" rx="2.800" ry="3.800" fill="#5b6bb4"/><path d="M8.200 7.500c0-4 5.600-4 5.600 0-1-1.600-4.600-1.600-5.600 0z" fill="#20204a"/><rect x="0" y="17" width="22" height="5" fill="#0b0b13" opacity=".0"/></g></symbol></defs></svg>
<div class="a" style="left:2034.3px;top:285.5px;width:24px;height:24px;background:#1a1020;border-radius:12px;box-shadow:inset -1.5px 0 0 #a01868;"></div>
<div class="a" style="left:2029px;top:285.5px;width:24px;height:24px;background:#1c1a18;border-radius:12px;box-shadow:inset -2px 0 0 #8a8070;"></div>
<div class="a" style="left:2022px;top:285.5px;width:24px;height:24px;background:#2a2622;border-radius:12px;"></div>
<svg style="left:2012px;top:285.5px;border-radius:50%;box-shadow:0 0 0 1px rgba(240,246,252,.08)" width="24" height="24"><use href="#avA"/></svg>
<svg style="position:absolute;left:2063.8px;top:288.4px" width="19.2" height="19.2" viewBox="0 0 16 16" fill="#f0f6fc"><path d="M2 5.5a3.5 3.5 0 1 1 5.898 2.549 5.508 5.508 0 0 1 3.034 4.084.75.75 0 1 1-1.482.235 4 4 0 0 0-7.9 0 .75.75 0 0 1-1.482-.236A5.507 5.507 0 0 1 3.102 8.05 3.493 3.493 0 0 1 2 5.5ZM11 4a3.001 3.001 0 0 1 2.22 5.018 5.01 5.01 0 0 1 2.56 3.012.749.749 0 0 1-.885.954.752.752 0 0 1-.549-.514 3.507 3.507 0 0 0-2.522-2.372.75.75 0 0 1-.574-.73v-.352a.75.75 0 0 1 .416-.672A1.5 1.5 0 0 0 11 5.5.75.75 0 0 1 11 4Zm-5.5-.5a2 2 0 1 0-.001 3.999A2 2 0 0 0 5.5 3.5Z"/></svg>
<div class="t" style="left:2088.0px;top:283.10px;font-size:14.8px;color:#f0f6fc;letter-spacing:-0.02px;">Contributors</div>
<div class="a" style="left:2178.4px;top:283.8px;width:34.5px;height:26.2px;background:#1e242c;border-radius:13.1px;"></div>
<div class="t" style="left:2177.6px;top:283.00px;font-size:14.6px;color:#f0f6fc;letter-spacing:-1.6px;width:34.5px;text-align:center;">12</div>
<div class="a" style="left:411px;top:323px;width:5px;height:62.5px;background:#3d1300;border-radius:0 0 2.500px 2.500px;"></div>
<div class="ln" style="top:316.60px;color:#9198a1">153</div>
<div class="cl" style="top:316.60px">    agentID <span class="b">=</span> gu.<span class="b">Value</span>(gu.<span class="b">Value</span>(activeToken.<span class="b">UserAgent</span>).<span class="b">FingerprintID</span>)</div>
<div class="ln" style="top:340.60px;color:#9198a1">154</div>
<div class="ln" style="top:364.60px;color:#9198a1">155</div>
<div class="cl" style="top:364.60px">    <span class="k">return</span> activeToken.<span class="b">UserID</span>, agentID, activeToken.<span class="b">ClientID</span>, prefLang, activeToken.<span class="b">ResourceOwner</span>, <span class="b">nil</span></div>
<div class="hb" style="top:388px"></div>
<div class="a" style="left:411px;top:390.3px;width:5px;height:139.2px;background:#3d1300;border-radius:2.5px;"></div>
<div class="t" style="left:426px;top:392.10px;font-size:14.1px;color:#9198a1;letter-spacing:-0.32px;">2 years ago</div>
<svg style="left:538.3px;top:395.8px;border-radius:50%;box-shadow:0 0 0 1px rgba(240,246,252,.08)" width="22" height="22"><use href="#avA"/></svg>
<div class="t" style="left:570px;top:392.10px;font-size:14.1px;color:#9198a1;letter-spacing:0.0px;">feat(API): support V2 token and ...</div>
<svg style="position:absolute;left:805px;top:396.2px" width="19.2" height="19.2" viewBox="0 0 16 16" fill="#9198a1"><path d="M7.75 14A1.75 1.75 0 0 1 6 12.25v-8.5C6 2.784 6.784 2 7.75 2h6.5c.966 0 1.75.784 1.75 1.75v8.5A1.75 1.75 0 0 1 14.25 14Zm-.25-1.75c0 .138.112.25.25.25h6.5a.25.25 0 0 0 .25-.25v-8.5a.25.25 0 0 0-.25-.25h-6.5a.25.25 0 0 0-.25.25ZM4.9 3.508a.75.75 0 0 1-.274 1.025.249.249 0 0 0-.126.217v6.5c0 .09.048.173.126.217a.75.75 0 0 1-.752 1.298A1.75 1.75 0 0 1 3 11.25v-6.5c0-.649.353-1.214.874-1.516a.75.75 0 0 1 1.025.274ZM1.625 5.533h.001a.249.249 0 0 0-.126.217v4.5c0 .09.048.173.126.217a.75.75 0 0 1-.752 1.298A1.748 1.748 0 0 1 0 10.25v-4.5a1.748 1.748 0 0 1 .873-1.516.75.75 0 1 1 .752 1.299Z"/></svg>
<div class="ln" style="top:388.60px;color:#9198a1">156</div>
<div class="cl" style="top:388.60px">}</div>
<div class="ln" style="top:412.60px;color:#9198a1">157</div>
<div class="ln" style="top:436.60px;color:#9198a1">158</div>
<div class="cl" style="top:436.60px"><span class="k">func</span> (repo <span class="b">*</span>TokenVerifierRepo) <span class="b">verifySessionToken</span>(ctx context.Context, sessionID, token string) (userID, clientID, resourceOwner string, err error) {</div>
<div class="ln" style="top:460.60px;color:#9198a1">159</div>
<div class="cl" style="top:460.60px">    ctx, span <span class="b">:=</span> tracing.<span class="b">NewSpan</span>(ctx)</div>
<div class="ln" style="top:484.60px;color:#9198a1">160</div>
<div class="cl" style="top:484.60px">    <span class="k">defer</span> <span class="k">func</span>() { span.<span class="b">EndWithError</span>(err) }()</div>
<div class="ln" style="top:508.60px;color:#9198a1">161</div>
<div class="hb" style="top:532px"></div>
<div class="a" style="left:411px;top:534.3px;width:5px;height:32.2px;background:#5a1e02;border-radius:2.5px;"></div>
<div class="t" style="left:426px;top:536.10px;font-size:14.1px;color:#9198a1;letter-spacing:-0.1px;">10 months ago</div>
<svg style="left:538.3px;top:539.8px;border-radius:50%;box-shadow:0 0 0 1px rgba(240,246,252,.08)" width="22" height="22"><use href="#avC"/></svg>
<div class="t" style="left:570px;top:536.10px;font-size:14.1px;color:#9198a1;letter-spacing:0.0px;">fix(session v2): allow searching f...</div>
<svg style="position:absolute;left:805px;top:540.2px" width="19.2" height="19.2" viewBox="0 0 16 16" fill="#9198a1"><path d="M7.75 14A1.75 1.75 0 0 1 6 12.25v-8.5C6 2.784 6.784 2 7.75 2h6.5c.966 0 1.75.784 1.75 1.75v8.5A1.75 1.75 0 0 1 14.25 14Zm-.25-1.75c0 .138.112.25.25.25h6.5a.25.25 0 0 0 .25-.25v-8.5a.25.25 0 0 0-.25-.25h-6.5a.25.25 0 0 0-.25.25ZM4.9 3.508a.75.75 0 0 1-.274 1.025.249.249 0 0 0-.126.217v6.5c0 .09.048.173.126.217a.75.75 0 0 1-.752 1.298A1.75 1.75 0 0 1 3 11.25v-6.5c0-.649.353-1.214.874-1.516a.75.75 0 0 1 1.025.274ZM1.625 5.533h.001a.249.249 0 0 0-.126.217v4.5c0 .09.048.173.126.217a.75.75 0 0 1-.752 1.298A1.748 1.748 0 0 1 0 10.25v-4.5a1.748 1.748 0 0 1 .873-1.516.75.75 0 1 1 .752 1.299Z"/></svg>
<div class="ln" style="top:538.60px;color:#9198a1">162</div>
<div class="cl" style="top:538.60px">    session, err <span class="b">:=</span> repo.<span class="b">Query</span>.<span class="b">SessionByID</span>(ctx, <span class="b">true</span>, sessionID, token, <span class="b">nil</span>)</div>
<div class="hb" style="top:569px"></div>
<div class="a" style="left:411px;top:571.3px;width:5px;height:67.2px;background:#3d1300;border-radius:2.5px;"></div>
<div class="t" style="left:426px;top:573.10px;font-size:14.1px;color:#9198a1;letter-spacing:-0.32px;">2 years ago</div>
<svg style="left:538.3px;top:576.8px;border-radius:50%;box-shadow:0 0 0 1px rgba(240,246,252,.08)" width="22" height="22"><use href="#avA"/></svg>
<div class="t" style="left:570px;top:573.10px;font-size:14.1px;color:#9198a1;letter-spacing:0.0px;">feat(API): support V2 token and ...</div>
<svg style="position:absolute;left:805px;top:577.2px" width="19.2" height="19.2" viewBox="0 0 16 16" fill="#9198a1"><path d="M7.75 14A1.75 1.75 0 0 1 6 12.25v-8.5C6 2.784 6.784 2 7.75 2h6.5c.966 0 1.75.784 1.75 1.75v8.5A1.75 1.75 0 0 1 14.25 14Zm-.25-1.75c0 .138.112.25.25.25h6.5a.25.25 0 0 0 .25-.25v-8.5a.25.25 0 0 0-.25-.25h-6.5a.25.25 0 0 0-.25.25ZM4.9 3.508a.75.75 0 0 1-.274 1.025.249.249 0 0 0-.126.217v6.5c0 .09.048.173.126.217a.75.75 0 0 1-.752 1.298A1.75 1.75 0 0 1 3 11.25v-6.5c0-.649.353-1.214.874-1.516a.75.75 0 0 1 1.025.274ZM1.625 5.533h.001a.249.249 0 0 0-.126.217v4.5c0 .09.048.173.126.217a.75.75 0 0 1-.752 1.298A1.748 1.748 0 0 1 0 10.25v-4.5a1.748 1.748 0 0 1 .873-1.516.75.75 0 1 1 .752 1.299Z"/></svg>
<div class="ln" style="top:569.80px;color:#9198a1">163</div>
<div class="cl" style="top:569.80px">    <span class="k">if</span> err <span class="b">!=</span> <span class="b">nil</span> {</div>
<div class="ln" style="top:593.80px;color:#9198a1">164</div>
<div class="cl" style="top:593.80px">        <span class="k">return</span> <span class="s">""</span>, <span class="s">""</span>, <span class="s">""</span>, err</div>
<div class="ln" style="top:617.80px;color:#9198a1">165</div>
<div class="cl" style="top:617.80px">    }</div>
<div class="hb" style="top:641px"></div>
<div class="a" style="left:411px;top:643.3px;width:5px;height:32.2px;background:#3d1300;border-radius:2.5px;"></div>
<div class="t" style="left:426px;top:645.10px;font-size:14.1px;color:#9198a1;letter-spacing:-0.32px;">2 years ago</div>
<svg style="left:538.3px;top:648.8px;border-radius:50%;box-shadow:0 0 0 1px rgba(240,246,252,.08)" width="22" height="22"><use href="#avA"/></svg>
<div class="t" style="left:570px;top:645.10px;font-size:14.1px;color:#9198a1;letter-spacing:0.075px;">feat: add possibility to set an ex...</div>
<svg style="position:absolute;left:805px;top:649.2px" width="19.2" height="19.2" viewBox="0 0 16 16" fill="#9198a1"><path d="M7.75 14A1.75 1.75 0 0 1 6 12.25v-8.5C6 2.784 6.784 2 7.75 2h6.5c.966 0 1.75.784 1.75 1.75v8.5A1.75 1.75 0 0 1 14.25 14Zm-.25-1.75c0 .138.112.25.25.25h6.5a.25.25 0 0 0 .25-.25v-8.5a.25.25 0 0 0-.25-.25h-6.5a.25.25 0 0 0-.25.25ZM4.9 3.508a.75.75 0 0 1-.274 1.025.249.249 0 0 0-.126.217v6.5c0 .09.048.173.126.217a.75.75 0 0 1-.752 1.298A1.75 1.75 0 0 1 3 11.25v-6.5c0-.649.353-1.214.874-1.516a.75.75 0 0 1 1.025.274ZM1.625 5.533h.001a.249.249 0 0 0-.126.217v4.5c0 .09.048.173.126.217a.75.75 0 0 1-.752 1.298A1.748 1.748 0 0 1 0 10.25v-4.5a1.748 1.748 0 0 1 .873-1.516.75.75 0 1 1 .752 1.299Z"/></svg>
<div class="ln" style="top:647.80px;color:#9198a1">166</div>
<div class="cl" style="top:647.80px">    <span class="k">if</span> <span class="b">!</span>session.<span class="b">Expiration</span>.<span class="b">IsZero</span>() <span class="b">&amp;&amp;</span> session.<span class="b">Expiration</span>.<span class="b">Before</span>(time.<span class="b">Now</span>()) {</div>
<div class="hb" style="top:678px"></div>
<div class="a" style="left:411px;top:680.3px;width:5px;height:33.2px;background:#3d1300;border-radius:2.5px;"></div>
<div class="t" style="left:426px;top:682.10px;font-size:14.1px;color:#9198a1;letter-spacing:-0.32px;">2 years ago</div>
<svg style="left:538.3px;top:685.8px;border-radius:50%;box-shadow:0 0 0 1px rgba(240,246,252,.08)" width="22" height="22"><use href="#avB"/></svg>
<div class="t" style="left:570px;top:682.10px;font-size:14.1px;color:#9198a1;letter-spacing:0.0px;">refactor: rename package errors ...</div>
<svg style="position:absolute;left:805px;top:686.2px" width="19.2" height="19.2" viewBox="0 0 16 16" fill="#9198a1"><path d="M7.75 14A1.75 1.75 0 0 1 6 12.25v-8.5C6 2.784 6.784 2 7.75 2h6.5c.966 0 1.75.784 1.75 1.75v8.5A1.75 1.75 0 0 1 14.25 14Zm-.25-1.75c0 .138.112.25.25.25h6.5a.25.25 0 0 0 .25-.25v-8.5a.25.25 0 0 0-.25-.25h-6.5a.25.25 0 0 0-.25.25ZM4.9 3.508a.75.75 0 0 1-.274 1.025.249.249 0 0 0-.126.217v6.5c0 .09.048.173.126.217a.75.75 0 0 1-.752 1.298A1.75 1.75 0 0 1 3 11.25v-6.5c0-.649.353-1.214.874-1.516a.75.75 0 0 1 1.025.274ZM1.625 5.533h.001a.249.249 0 0 0-.126.217v4.5c0 .09.048.173.126.217a.75.75 0 0 1-.752 1.298A1.748 1.748 0 0 1 0 10.25v-4.5a1.748 1.748 0 0 1 .873-1.516.75.75 0 1 1 .752 1.299Z"/></svg>
<div class="ln" style="top:685.00px;color:#9198a1">167</div>
<div class="cl" style="top:685.00px">        <span class="k">return</span> <span class="s">""</span>, <span class="s">""</span>, <span class="s">""</span>, zerrors.<span class="b">ThrowPermissionDenied</span>(<span class="b">nil</span>, <span class="s">"AUTHZ-EGDo3"</span>, <span class="s">"session expired"</span>)</div>
<div class="hb" style="top:716px"></div>
<div class="a" style="left:411px;top:718.3px;width:5px;height:32.2px;background:#3d1300;border-radius:2.5px;"></div>
<div class="t" style="left:426px;top:720.10px;font-size:14.1px;color:#9198a1;letter-spacing:-0.32px;">2 years ago</div>
<svg style="left:538.3px;top:723.8px;border-radius:50%;box-shadow:0 0 0 1px rgba(240,246,252,.08)" width="22" height="22"><use href="#avA"/></svg>
<div class="t" style="left:570px;top:720.10px;font-size:14.1px;color:#9198a1;letter-spacing:0.075px;">feat: add possibility to set an ex...</div>
<svg style="position:absolute;left:805px;top:724.2px" width="19.2" height="19.2" viewBox="0 0 16 16" fill="#9198a1"><path d="M7.75 14A1.75 1.75 0 0 1 6 12.25v-8.5C6 2.784 6.784 2 7.75 2h6.5c.966 0 1.75.784 1.75 1.75v8.5A1.75 1.75 0 0 1 14.25 14Zm-.25-1.75c0 .138.112.25.25.25h6.5a.25.25 0 0 0 .25-.25v-8.5a.25.25 0 0 0-.25-.25h-6.5a.25.25 0 0 0-.25.25ZM4.9 3.508a.75.75 0 0 1-.274 1.025.249.249 0 0 0-.126.217v6.5c0 .09.048.173.126.217a.75.75 0 0 1-.752 1.298A1.75 1.75 0 0 1 3 11.25v-6.5c0-.649.353-1.214.874-1.516a.75.75 0 0 1 1.025.274ZM1.625 5.533h.001a.249.249 0 0 0-.126.217v4.5c0 .09.048.173.126.217a.75.75 0 0 1-.752 1.298A1.748 1.748 0 0 1 0 10.25v-4.5a1.748 1.748 0 0 1 .873-1.516.75.75 0 1 1 .752 1.299Z"/></svg>
<div class="ln" style="top:722.20px;color:#9198a1">168</div>
<div class="cl" style="top:722.20px">    }</div>
<div class="hb" style="top:753px"></div>
<div class="a" style="left:411px;top:755.3px;width:5px;height:163.2px;background:#3d1300;border-radius:2.5px;"></div>
<div class="t" style="left:426px;top:757.10px;font-size:14.1px;color:#9198a1;letter-spacing:-0.32px;">2 years ago</div>
<svg style="left:538.3px;top:760.8px;border-radius:50%;box-shadow:0 0 0 1px rgba(240,246,252,.08)" width="22" height="22"><use href="#avA"/></svg>
<div class="t" style="left:570px;top:757.10px;font-size:14.1px;color:#9198a1;letter-spacing:0.0px;">feat(API): support V2 token and ...</div>
<svg style="position:absolute;left:805px;top:761.2px" width="19.2" height="19.2" viewBox="0 0 16 16" fill="#9198a1"><path d="M7.75 14A1.75 1.75 0 0 1 6 12.25v-8.5C6 2.784 6.784 2 7.75 2h6.5c.966 0 1.75.784 1.75 1.75v8.5A1.75 1.75 0 0 1 14.25 14Zm-.25-1.75c0 .138.112.25.25.25h6.5a.25.25 0 0 0 .25-.25v-8.5a.25.25 0 0 0-.25-.25h-6.5a.25.25 0 0 0-.25.25ZM4.9 3.508a.75.75 0 0 1-.274 1.025.249.249 0 0 0-.126.217v6.5c0 .09.048.173.126.217a.75.75 0 0 1-.752 1.298A1.75 1.75 0 0 1 3 11.25v-6.5c0-.649.353-1.214.874-1.516a.75.75 0 0 1 1.025.274ZM1.625 5.533h.001a.249.249 0 0 0-.126.217v4.5c0 .09.048.173.126.217a.75.75 0 0 1-.752 1.298A1.748 1.748 0 0 1 0 10.25v-4.5a1.748 1.748 0 0 1 .873-1.516.75.75 0 1 1 .752 1.299Z"/></svg>
<div class="ln" style="top:753.40px;color:#9198a1">169</div>
<div class="cl" style="top:753.40px">    <span class="k">if</span> err <span class="b">=</span> repo.<span class="b">checkAuthentication</span>(ctx, authMethodsFromSession(session), session.<span class="b">UserFactor</span>.<span class="b">UserID</span>); err <span class="b">!=</span> <span class="b">nil</span> {</div>
<div class="ln" style="top:777.40px;color:#9198a1">170</div>
<div class="cl" style="top:777.40px">        <span class="k">return</span> <span class="s">""</span>, <span class="s">""</span>, <span class="s">""</span>, err</div>
<div class="ln" style="top:801.40px;color:#9198a1">171</div>
<div class="cl" style="top:801.40px">    }</div>
<div class="ln" style="top:825.40px;color:#9198a1">172</div>
<div class="cl" style="top:825.40px">    <span class="k">return</span> session.<span class="b">UserFactor</span>.<span class="b">UserID</span>, <span class="s">""</span>, session.<span class="b">UserFactor</span>.<span class="b">ResourceOwner</span>, <span class="b">nil</span></div>
<div class="ln" style="top:849.40px;color:#9198a1">173</div>
<div class="cl" style="top:849.40px">}</div>
<div class="ln" style="top:873.40px;color:#9198a1">174</div>
<div class="ln" style="top:897.40px;color:#f0f6fc">175</div>
<div class="cl" style="top:897.40px"><span class="sel"><span class="c">// checkAuthentication ensures the session or token was authenticated (at least a single [domain.UserAuthMethodType]).</span></span></div>
<div class="hb" style="top:921px"></div>
<div class="a" style="left:411px;top:923.3px;width:5px;height:32.2px;background:#5a1e02;border-radius:2.5px;"></div>
<div class="t" style="left:426px;top:925.10px;font-size:14.1px;color:#f0f6fc;letter-spacing:-0.32px;"><span class="sel2">last year</span></div>
<svg style="left:538.3px;top:928.8px;border-radius:50%;box-shadow:0 0 0 1px rgba(240,246,252,.08)" width="22" height="22"><use href="#avB"/></svg><div class="a" style="left:538.3px;top:928.8px;width:22px;height:22px;border-radius:50%;background:rgba(48,112,225,.78)"></div>
<div class="t" style="left:570px;top:925.10px;font-size:14.1px;color:#9198a1;letter-spacing:0.03px;"><span class="sel2">docs: standardize multi-factor sp</span>...</div>
<svg style="position:absolute;left:805px;top:929.2px" width="19.2" height="19.2" viewBox="0 0 16 16" fill="#9198a1"><path d="M7.75 14A1.75 1.75 0 0 1 6 12.25v-8.5C6 2.784 6.784 2 7.75 2h6.5c.966 0 1.75.784 1.75 1.75v8.5A1.75 1.75 0 0 1 14.25 14Zm-.25-1.75c0 .138.112.25.25.25h6.5a.25.25 0 0 0 .25-.25v-8.5a.25.25 0 0 0-.25-.25h-6.5a.25.25 0 0 0-.25.25ZM4.9 3.508a.75.75 0 0 1-.274 1.025.249.249 0 0 0-.126.217v6.5c0 .09.048.173.126.217a.75.75 0 0 1-.752 1.298A1.75 1.75 0 0 1 3 11.25v-6.5c0-.649.353-1.214.874-1.516a.75.75 0 0 1 1.025.274ZM1.625 5.533h.001a.249.249 0 0 0-.126.217v4.5c0 .09.048.173.126.217a.75.75 0 0 1-.752 1.298A1.748 1.748 0 0 1 0 10.25v-4.5a1.748 1.748 0 0 1 .873-1.516.75.75 0 1 1 .752 1.299Z"/></svg>
<div class="ln" style="top:927.40px;color:#9198a1"><span class="sel" style="color:#9198a1;padding:0;margin:0">176</span></div>
<div class="cl" style="top:927.40px"><span class="sel"><span class="c">// It will also check if there was a multi-factor authentication, if either MFA is forced by the login policy or if the user has set up any second factor</span></span></div>
<div class="hb" style="top:958px"></div>
<div class="a" style="left:411px;top:960.3px;width:5px;height:43.2px;background:#3d1300;border-radius:2.5px;"></div>
<div class="t" style="left:426px;top:962.10px;font-size:14.1px;color:#f0f6fc;letter-spacing:-0.32px;"><span class="sel2">2 years ago</span></div>
<svg style="left:538.3px;top:965.8px;border-radius:50%;box-shadow:0 0 0 1px rgba(240,246,252,.08)" width="22" height="22"><use href="#avA"/></svg><div class="a" style="left:538.3px;top:965.8px;width:22px;height:22px;border-radius:50%;background:rgba(48,112,225,.78)"></div>
<div class="t" style="left:570px;top:962.10px;font-size:14.1px;color:#9198a1;letter-spacing:0.0px;"><span class="sel2">feat(API): support V2 token and </span>...</div>
<svg style="position:absolute;left:805px;top:966.2px" width="19.2" height="19.2" viewBox="0 0 16 16" fill="#9198a1"><path d="M7.75 14A1.75 1.75 0 0 1 6 12.25v-8.5C6 2.784 6.784 2 7.75 2h6.5c.966 0 1.75.784 1.75 1.75v8.5A1.75 1.75 0 0 1 14.25 14Zm-.25-1.75c0 .138.112.25.25.25h6.5a.25.25 0 0 0 .25-.25v-8.5a.25.25 0 0 0-.25-.25h-6.5a.25.25 0 0 0-.25.25ZM4.9 3.508a.75.75 0 0 1-.274 1.025.249.249 0 0 0-.126.217v6.5c0 .09.048.173.126.217a.75.75 0 0 1-.752 1.298A1.75 1.75 0 0 1 3 11.25v-6.5c0-.649.353-1.214.874-1.516a.75.75 0 0 1 1.025.274ZM1.625 5.533h.001a.249.249 0 0 0-.126.217v4.5c0 .09.048.173.126.217a.75.75 0 0 1-.752 1.298A1.748 1.748 0 0 1 0 10.25v-4.5a1.748 1.748 0 0 1 .873-1.516.75.75 0 1 1 .752 1.299Z"/></svg>
<div class="ln" style="top:958.60px;color:#9198a1"><span class="sel" style="color:#9198a1;padding:0;margin:0">177</span></div>
<div class="cl" style="top:958.60px"><span class="sel"><span class="k">func</span> (repo <span class="b">*</span>TokenVerifierRepo) <span class="b">checkAuthentication</span>(ctx context.Context, authMethods []domain.UserAuthMethodType, userID string) error {</span></div>
<div class="ln" style="top:982.60px;color:#9198a1"><span class="sel" style="color:#9198a1;padding:0;margin:0">178</span></div>
<div class="cl" style="top:982.60px"><span class="sel">    <span class="k">if</span> len(authMethods) <span class="b">==</span> <span class="b">0</span> {</span></div>
<div class="hb" style="top:1006px"></div>
<div class="a" style="left:411px;top:1008.3px;width:5px;height:32.2px;background:#3d1300;border-radius:2.5px;"></div>
<div class="t" style="left:426px;top:1010.10px;font-size:14.1px;color:#f0f6fc;letter-spacing:-0.32px;"><span class="sel2">2 years ago</span></div>
<svg style="left:538.3px;top:1013.8px;border-radius:50%;box-shadow:0 0 0 1px rgba(240,246,252,.08)" width="22" height="22"><use href="#avB"/></svg><div class="a" style="left:538.3px;top:1013.8px;width:22px;height:22px;border-radius:50%;background:rgba(48,112,225,.78)"></div>
<div class="t" style="left:570px;top:1010.10px;font-size:14.1px;color:#9198a1;letter-spacing:0.0px;"><span class="sel2">refactor: rename package errors </span>...</div>
<svg style="position:absolute;left:805px;top:1014.2px" width="19.2" height="19.2" viewBox="0 0 16 16" fill="#9198a1"><path d="M7.75 14A1.75 1.75 0 0 1 6 12.25v-8.5C6 2.784 6.784 2 7.75 2h6.5c.966 0 1.75.784 1.75 1.75v8.5A1.75 1.75 0 0 1 14.25 14Zm-.25-1.75c0 .138.112.25.25.25h6.5a.25.25 0 0 0 .25-.25v-8.5a.25.25 0 0 0-.25-.25h-6.5a.25.25 0 0 0-.25.25ZM4.9 3.508a.75.75 0 0 1-.274 1.025.249.249 0 0 0-.126.217v6.5c0 .09.048.173.126.217a.75.75 0 0 1-.752 1.298A1.75 1.75 0 0 1 3 11.25v-6.5c0-.649.353-1.214.874-1.516a.75.75 0 0 1 1.025.274ZM1.625 5.533h.001a.249.249 0 0 0-.126.217v4.5c0 .09.048.173.126.217a.75.75 0 0 1-.752 1.298A1.748 1.748 0 0 1 0 10.25v-4.5a1.748 1.748 0 0 1 .873-1.516.75.75 0 1 1 .752 1.299Z"/></svg>
<div class="a" style="left:830px;top:1012px;width:1402px;height:24px;background:#1e1a14;"></div>
<div class="a" style="left:830px;top:1012px;width:2px;height:24px;background:#a8791c;"></div>
<div class="a" style="left:838px;top:1009px;width:29px;height:29px;background:#262c36;border:1px solid #3d444d;border-radius:7px;"></div>
<svg style="position:absolute;left:843px;top:1014px" width="19.2" height="19.2" viewBox="0 0 16 16" fill="#9198a1"><path d="M8 9a1.5 1.5 0 1 0 0-3 1.5 1.5 0 0 0 0 3ZM1.5 9a1.5 1.5 0 1 0 0-3 1.5 1.5 0 0 0 0 3Zm13 0a1.5 1.5 0 1 0 0-3 1.5 1.5 0 0 0 0 3Z"/></svg>
<div class="a" style="left:2159px;top:1010px;width:64px;height:34px;background:#212830;border:1px solid #3d444d;border-radius:8.5px;"></div>
<div class="a" style="left:2191px;top:1011px;width:1px;height:32px;background:#3d444d;"></div>
<svg style="position:absolute;left:2166px;top:1017.5px" width="19.2" height="19.2" viewBox="0 0 16 16" fill="#9198a1"><path d="M7.998 15.035c-4.562 0-7.873-2.914-7.998-3.749V9.338c.085-.628.677-1.686 1.588-2.065.013-.07.024-.143.036-.218.029-.183.06-.384.126-.612-.201-.508-.254-1.084-.254-1.656 0-.87.128-1.769.693-2.484.579-.733 1.494-1.124 2.724-1.261 1.206-.134 2.262.034 2.944.765.05.053.096.108.139.165.044-.057.094-.112.143-.165.682-.731 1.738-.899 2.944-.765 1.23.137 2.145.528 2.724 1.261.566.715.693 1.614.693 2.484 0 .572-.053 1.148-.254 1.656.066.228.098.429.126.612.012.076.024.148.037.218.924.385 1.522 1.471 1.591 2.095v1.872c0 .766-3.351 3.795-8.002 3.795Zm0-1.485c2.28 0 4.584-1.11 5.002-1.433V7.862l-.023-.116c-.49.21-1.075.291-1.727.291-1.146 0-2.059-.327-2.71-.991A3.222 3.222 0 0 1 8 6.303a3.24 3.24 0 0 1-.544.743c-.65.664-1.563.991-2.71.991-.652 0-1.236-.081-1.727-.291l-.023.116v4.255c.419.323 2.722 1.433 5.002 1.433ZM6.762 2.83c-.193-.206-.637-.413-1.682-.297-1.019.113-1.479.404-1.713.7-.247.312-.369.789-.369 1.554 0 .793.129 1.171.308 1.371.162.181.519.379 1.442.379.853 0 1.339-.235 1.638-.54.315-.322.527-.827.617-1.553.117-.935-.037-1.395-.241-1.614Zm4.155-.297c-1.044-.116-1.488.091-1.681.297-.204.219-.359.679-.242 1.614.091.726.303 1.231.618 1.553.299.305.784.54 1.638.54.922 0 1.28-.198 1.442-.379.179-.2.308-.578.308-1.371 0-.765-.123-1.242-.37-1.554-.233-.296-.693-.587-1.713-.7ZM6.25 9.037a.75.75 0 0 1 .75.75v1.501a.75.75 0 0 1-1.5 0V9.787a.75.75 0 0 1 .75-.75Zm4.25.75v1.501a.75.75 0 0 1-1.5 0V9.787a.75.75 0 0 1 1.5 0Z"/></svg>
<svg style="position:absolute;left:2196.7px;top:1017.8px" width="19.2" height="19.2" viewBox="0 0 16 16" fill="#9198a1"><path d="m4.427 7.427 3.396 3.396a.25.25 0 0 0 .354 0l3.396-3.396A.25.25 0 0 0 11.396 7H4.604a.25.25 0 0 0-.177.427Z"/></svg>
<div class="ln" style="top:1012.60px;color:#9198a1"><span class="sel" style="color:#9198a1;padding:0;margin:0">179</span></div>
<div class="cl" style="top:1012.60px"><span class="sel">        <span class="k">return</span> zerrors.<span class="b">ThrowPermissionDenied</span>(<span class="b">nil</span>, <span class="s">"AUTHZ-Kl3p0"</span>, <span class="s">"authentication required"</span>)</span></div>
<div class="hb" style="top:1043px"></div>
<div class="a" style="left:411px;top:1045.3px;width:5px;height:32.2px;background:#3d1300;border-radius:2.5px;"></div>
<div class="t" style="left:426px;top:1047.10px;font-size:14.1px;color:#9198a1;letter-spacing:-0.32px;">2 years ago</div>
<svg style="left:538.3px;top:1050.8px;border-radius:50%;box-shadow:0 0 0 1px rgba(240,246,252,.08)" width="22" height="22"><use href="#avA"/></svg>
<div class="t" style="left:570px;top:1047.10px;font-size:14.1px;color:#9198a1;letter-spacing:0.0px;">feat(API): support V2 token and ...</div>
<svg style="position:absolute;left:805px;top:1051.2px" width="19.2" height="19.2" viewBox="0 0 16 16" fill="#9198a1"><path d="M7.75 14A1.75 1.75 0 0 1 6 12.25v-8.5C6 2.784 6.784 2 7.75 2h6.5c.966 0 1.75.784 1.75 1.75v8.5A1.75 1.75 0 0 1 14.25 14Zm-.25-1.75c0 .138.112.25.25.25h6.5a.25.25 0 0 0 .25-.25v-8.5a.25.25 0 0 0-.25-.25h-6.5a.25.25 0 0 0-.25.25ZM4.9 3.508a.75.75 0 0 1-.274 1.025.249.249 0 0 0-.126.217v6.5c0 .09.048.173.126.217a.75.75 0 0 1-.752 1.298A1.75 1.75 0 0 1 3 11.25v-6.5c0-.649.353-1.214.874-1.516a.75.75 0 0 1 1.025.274ZM1.625 5.533h.001a.249.249 0 0 0-.126.217v4.5c0 .09.048.173.126.217a.75.75 0 0 1-.752 1.298A1.748 1.748 0 0 1 0 10.25v-4.5a1.748 1.748 0 0 1 .873-1.516.75.75 0 1 1 .752 1.299Z"/></svg>
<div class="ln" style="top:1049.80px;color:#9198a1">180</div>
<div class="cl" style="top:1049.80px">    }</div>
<div class="hb" style="top:1080px"></div>
<div class="a" style="left:411px;top:1082.3px;width:5px;height:33.2px;background:#ffc680;border-radius:2.5px;"></div>
<div class="t" style="left:426px;top:1084.10px;font-size:14.1px;color:#9198a1;letter-spacing:-0.32px;">last week</div>
<svg style="left:538.3px;top:1087.8px;border-radius:50%;box-shadow:0 0 0 1px rgba(240,246,252,.08)" width="22" height="22"><use href="#avA"/></svg>
<div class="t" style="left:570px;top:1084.10px;font-size:14.1px;color:#9198a1;letter-spacing:0.37px;"> Merge commit from fork</div>
<svg style="position:absolute;left:805px;top:1088.2px" width="19.2" height="19.2" viewBox="0 0 16 16" fill="#9198a1"><path d="M7.75 14A1.75 1.75 0 0 1 6 12.25v-8.5C6 2.784 6.784 2 7.75 2h6.5c.966 0 1.75.784 1.75 1.75v8.5A1.75 1.75 0 0 1 14.25 14Zm-.25-1.75c0 .138.112.25.25.25h6.5a.25.25 0 0 0 .25-.25v-8.5a.25.25 0 0 0-.25-.25h-6.5a.25.25 0 0 0-.25.25ZM4.9 3.508a.75.75 0 0 1-.274 1.025.249.249 0 0 0-.126.217v6.5c0 .09.048.173.126.217a.75.75 0 0 1-.752 1.298A1.75 1.75 0 0 1 3 11.25v-6.5c0-.649.353-1.214.874-1.516a.75.75 0 0 1 1.025.274ZM1.625 5.533h.001a.249.249 0 0 0-.126.217v4.5c0 .09.048.173.126.217a.75.75 0 0 1-.752 1.298A1.748 1.748 0 0 1 0 10.25v-4.5a1.748 1.748 0 0 1 .873-1.516.75.75 0 1 1 .752 1.299Z"/></svg>
<div class="ln" style="top:1087.00px;color:#9198a1">181</div>
<div class="cl" style="top:1087.00px">    <span class="c">// if the user has MFA, we don't need to check any mfa requirements</span></div>
<div class="hb" style="top:1118px"></div>
<div class="a" style="left:411px;top:1120.3px;width:5px;height:67.2px;background:#3d1300;border-radius:2.5px;"></div>
<div class="t" style="left:426px;top:1122.10px;font-size:14.1px;color:#9198a1;letter-spacing:-0.32px;">2 years ago</div>
<svg style="left:538.3px;top:1125.8px;border-radius:50%;box-shadow:0 0 0 1px rgba(240,246,252,.08)" width="22" height="22"><use href="#avA"/></svg>
<div class="t" style="left:570px;top:1122.10px;font-size:14.1px;color:#9198a1;letter-spacing:0.0px;">feat(API): support V2 token and ...</div>
<svg style="position:absolute;left:805px;top:1126.2px" width="19.2" height="19.2" viewBox="0 0 16 16" fill="#9198a1"><path d="M7.75 14A1.75 1.75 0 0 1 6 12.25v-8.5C6 2.784 6.784 2 7.75 2h6.5c.966 0 1.75.784 1.75 1.75v8.5A1.75 1.75 0 0 1 14.25 14Zm-.25-1.75c0 .138.112.25.25.25h6.5a.25.25 0 0 0 .25-.25v-8.5a.25.25 0 0 0-.25-.25h-6.5a.25.25 0 0 0-.25.25ZM4.9 3.508a.75.75 0 0 1-.274 1.025.249.249 0 0 0-.126.217v6.5c0 .09.048.173.126.217a.75.75 0 0 1-.752 1.298A1.75 1.75 0 0 1 3 11.25v-6.5c0-.649.353-1.214.874-1.516a.75.75 0 0 1 1.025.274ZM1.625 5.533h.001a.249.249 0 0 0-.126.217v4.5c0 .09.048.173.126.217a.75.75 0 0 1-.752 1.298A1.748 1.748 0 0 1 0 10.25v-4.5a1.748 1.748 0 0 1 .873-1.516.75.75 0 1 1 .752 1.299Z"/></svg>
<div class="ln" style="top:1118.20px;color:#9198a1">182</div>
<div class="cl" style="top:1118.20px">    <span class="k">if</span> domain.<span class="b">HasMFA</span>(authMethods) {</div>
<div class="ln" style="top:1142.20px;color:#9198a1">183</div>
<div class="cl" style="top:1142.20px">        <span class="k">return</span> <span class="b">nil</span></div>
<div class="ln" style="top:1166.20px;color:#9198a1">184</div>
<div class="cl" style="top:1166.20px">    }</div>
<div class="hb" style="top:1190px"></div>
<div class="a" style="left:411px;top:1192.3px;width:5px;height:32.2px;background:#3d1300;border-radius:2.5px;"></div>
<div class="t" style="left:426px;top:1194.10px;font-size:14.1px;color:#9198a1;letter-spacing:-0.32px;">last year</div>
<svg style="left:538.3px;top:1197.8px;border-radius:50%;box-shadow:0 0 0 1px rgba(240,246,252,.08)" width="22" height="22"><use href="#avB"/></svg>
<div class="t" style="left:570px;top:1194.10px;font-size:14.1px;color:#9198a1;letter-spacing:-0.08px;">fix(oidc): IDP and machine user a...</div>
<svg style="position:absolute;left:805px;top:1198.2px" width="19.2" height="19.2" viewBox="0 0 16 16" fill="#9198a1"><path d="M7.75 14A1.75 1.75 0 0 1 6 12.25v-8.5C6 2.784 6.784 2 7.75 2h6.5c.966 0 1.75.784 1.75 1.75v8.5A1.75 1.75 0 0 1 14.25 14Zm-.25-1.75c0 .138.112.25.25.25h6.5a.25.25 0 0 0 .25-.25v-8.5a.25.25 0 0 0-.25-.25h-6.5a.25.25 0 0 0-.25.25ZM4.9 3.508a.75.75 0 0 1-.274 1.025.249.249 0 0 0-.126.217v6.5c0 .09.048.173.126.217a.75.75 0 0 1-.752 1.298A1.75 1.75 0 0 1 3 11.25v-6.5c0-.649.353-1.214.874-1.516a.75.75 0 0 1 1.025.274ZM1.625 5.533h.001a.249.249 0 0 0-.126.217v4.5c0 .09.048.173.126.217a.75.75 0 0 1-.752 1.298A1.748 1.748 0 0 1 0 10.25v-4.5a1.748 1.748 0 0 1 .873-1.516.75.75 0 1 1 .752 1.299Z"/></svg>
<div class="ln" style="top:1196.20px;color:#9198a1">185</div>
<div class="cl" style="top:1196.20px">    requirements, err <span class="b">:=</span> repo.<span class="b">Query</span>.<span class="b">ListUserAuthMethodTypesRequired</span>(setCallerCtx(ctx, userID), userID)</div>
<div class="hb" style="top:1227px"></div>
<div class="a" style="left:411px;top:1229.3px;width:5px;height:67.2px;background:#3d1300;border-radius:2.5px;"></div>
<div class="t" style="left:426px;top:1231.10px;font-size:14.1px;color:#9198a1;letter-spacing:-0.32px;">2 years ago</div>
<svg style="left:538.3px;top:1234.8px;border-radius:50%;box-shadow:0 0 0 1px rgba(240,246,252,.08)" width="22" height="22"><use href="#avA"/></svg>
<div class="t" style="left:570px;top:1231.10px;font-size:14.1px;color:#9198a1;letter-spacing:0.0px;">feat(API): support V2 token and ...</div>
<svg style="position:absolute;left:805px;top:1235.2px" width="19.2" height="19.2" viewBox="0 0 16 16" fill="#9198a1"><path d="M7.75 14A1.75 1.75 0 0 1 6 12.25v-8.5C6 2.784 6.784 2 7.75 2h6.5c.966 0 1.75.784 1.75 1.75v8.5A1.75 1.75 0 0 1 14.25 14Zm-.25-1.75c0 .138.112.25.25.25h6.5a.25.25 0 0 0 .25-.25v-8.5a.25.25 0 0 0-.25-.25h-6.5a.25.25 0 0 0-.25.25ZM4.9 3.508a.75.75 0 0 1-.274 1.025.249.249 0 0 0-.126.217v6.5c0 .09.048.173.126.217a.75.75 0 0 1-.752 1.298A1.75 1.75 0 0 1 3 11.25v-6.5c0-.649.353-1.214.874-1.516a.75.75 0 0 1 1.025.274ZM1.625 5.533h.001a.249.249 0 0 0-.126.217v4.5c0 .09.048.173.126.217a.75.75 0 0 1-.752 1.298A1.748 1.748 0 0 1 0 10.25v-4.5a1.748 1.748 0 0 1 .873-1.516.75.75 0 1 1 .752 1.299Z"/></svg>
<div class="ln" style="top:1227.40px;color:#9198a1">186</div>
<div class="cl" style="top:1227.40px">    <span class="k">if</span> err <span class="b">!=</span> <span class="b">nil</span> {</div>
<div class="ln" style="top:1251.40px;color:#9198a1">187</div>
<div class="cl" style="top:1251.40px">        <span class="k">return</span> err</div>
<div class="ln" style="top:1275.40px;color:#9198a1">188</div>
<div class="cl" style="top:1275.40px">    }</div>
<div class="hb" style="top:1299px"></div>
<div class="a" style="left:411px;top:1301.3px;width:5px;height:32.2px;background:#ffc680;border-radius:2.5px;"></div>
<div class="t" style="left:426px;top:1303.10px;font-size:14.1px;color:#9198a1;letter-spacing:-0.32px;">last week</div>
<svg style="left:538.3px;top:1306.8px;border-radius:50%;box-shadow:0 0 0 1px rgba(240,246,252,.08)" width="22" height="22"><use href="#avA"/></svg>
<div class="t" style="left:570px;top:1303.10px;font-size:14.1px;color:#9198a1;letter-spacing:0.37px;"> Merge commit from fork</div>
<svg style="position:absolute;left:805px;top:1307.2px" width="19.2" height="19.2" viewBox="0 0 16 16" fill="#9198a1"><path d="M7.75 14A1.75 1.75 0 0 1 6 12.25v-8.5C6 2.784 6.784 2 7.75 2h6.5c.966 0 1.75.784 1.75 1.75v8.5A1.75 1.75 0 0 1 14.25 14Zm-.25-1.75c0 .138.112.25.25.25h6.5a.25.25 0 0 0 .25-.25v-8.5a.25.25 0 0 0-.25-.25h-6.5a.25.25 0 0 0-.25.25ZM4.9 3.508a.75.75 0 0 1-.274 1.025.249.249 0 0 0-.126.217v6.5c0 .09.048.173.126.217a.75.75 0 0 1-.752 1.298A1.75 1.75 0 0 1 3 11.25v-6.5c0-.649.353-1.214.874-1.516a.75.75 0 0 1 1.025.274ZM1.625 5.533h.001a.249.249 0 0 0-.126.217v4.5c0 .09.048.173.126.217a.75.75 0 0 1-.752 1.298A1.748 1.748 0 0 1 0 10.25v-4.5a1.748 1.748 0 0 1 .873-1.516.75.75 0 1 1 .752 1.299Z"/></svg>
<div class="ln" style="top:1305.40px;color:#9198a1">189</div>
<div class="cl" style="top:1305.40px">    <span class="c">// machine users do not have interactive logins, so we don't check for MFA requirements</span></div>
<div class="hb" style="top:1336px"></div>
<div class="a" style="left:411px;top:1338.3px;width:5px;height:67.2px;background:#3d1300;border-radius:2.5px;"></div>
<div class="t" style="left:426px;top:1340.10px;font-size:14.1px;color:#9198a1;letter-spacing:-0.32px;">last year</div>
<svg style="left:538.3px;top:1343.8px;border-radius:50%;box-shadow:0 0 0 1px rgba(240,246,252,.08)" width="22" height="22"><use href="#avB"/></svg>
<div class="t" style="left:570px;top:1340.10px;font-size:14.1px;color:#9198a1;letter-spacing:-0.08px;">fix(oidc): IDP and machine user a...</div>
<svg style="position:absolute;left:805px;top:1344.2px" width="19.2" height="19.2" viewBox="0 0 16 16" fill="#9198a1"><path d="M7.75 14A1.75 1.75 0 0 1 6 12.25v-8.5C6 2.784 6.784 2 7.75 2h6.5c.966 0 1.75.784 1.75 1.75v8.5A1.75 1.75 0 0 1 14.25 14Zm-.25-1.75c0 .138.112.25.25.25h6.5a.25.25 0 0 0 .25-.25v-8.5a.25.25 0 0 0-.25-.25h-6.5a.25.25 0 0 0-.25.25ZM4.9 3.508a.75.75 0 0 1-.274 1.025.249.249 0 0 0-.126.217v6.5c0 .09.048.173.126.217a.75.75 0 0 1-.752 1.298A1.75 1.75 0 0 1 3 11.25v-6.5c0-.649.353-1.214.874-1.516a.75.75 0 0 1 1.025.274ZM1.625 5.533h.001a.249.249 0 0 0-.126.217v4.5c0 .09.048.173.126.217a.75.75 0 0 1-.752 1.298A1.748 1.748 0 0 1 0 10.25v-4.5a1.748 1.748 0 0 1 .873-1.516.75.75 0 1 1 .752 1.299Z"/></svg>
<div class="ln" style="top:1336.60px;color:#9198a1">190</div>
<div class="cl" style="top:1336.60px">    <span class="k">if</span> requirements.<span class="b">UserType</span> <span class="b">==</span> domain.<span class="b">UserTypeMachine</span> {</div>
<div class="ln" style="top:1360.60px;color:#9198a1">191</div>
<div class="cl" style="top:1360.60px">        <span class="k">return</span> <span class="b">nil</span></div>
<div class="ln" style="top:1384.60px;color:#9198a1">192</div>
<div class="cl" style="top:1384.60px">    }</div>
<div class="hb" style="top:1408px"></div>
<div class="a" style="left:411px;top:1410.3px;width:5px;height:115.2px;background:#ffc680;border-radius:2.5px;"></div>
<div class="t" style="left:426px;top:1412.10px;font-size:14.1px;color:#9198a1;letter-spacing:-0.32px;">last week</div>
<svg style="left:538.3px;top:1415.8px;border-radius:50%;box-shadow:0 0 0 1px rgba(240,246,252,.08)" width="22" height="22"><use href="#avA"/></svg>
<div class="t" style="left:570px;top:1412.10px;font-size:14.1px;color:#9198a1;letter-spacing:0.37px;"> Merge commit from fork</div>
<svg style="position:absolute;left:805px;top:1416.2px" width="19.2" height="19.2" viewBox="0 0 16 16" fill="#9198a1"><path d="M7.75 14A1.75 1.75 0 0 1 6 12.25v-8.5C6 2.784 6.784 2 7.75 2h6.5c.966 0 1.75.784 1.75 1.75v8.5A1.75 1.75 0 0 1 14.25 14Zm-.25-1.75c0 .138.112.25.25.25h6.5a.25.25 0 0 0 .25-.25v-8.5a.25.25 0 0 0-.25-.25h-6.5a.25.25 0 0 0-.25.25ZM4.9 3.508a.75.75 0 0 1-.274 1.025.249.249 0 0 0-.126.217v6.5c0 .09.048.173.126.217a.75.75 0 0 1-.752 1.298A1.75 1.75 0 0 1 3 11.25v-6.5c0-.649.353-1.214.874-1.516a.75.75 0 0 1 1.025.274ZM1.625 5.533h.001a.249.249 0 0 0-.126.217v4.5c0 .09.048.173.126.217a.75.75 0 0 1-.752 1.298A1.748 1.748 0 0 1 0 10.25v-4.5a1.748 1.748 0 0 1 .873-1.516.75.75 0 1 1 .752 1.299Z"/></svg>
<div class="ln" style="top:1408.60px;color:#9198a1">193</div>
<div class="cl" style="top:1408.60px">    <span class="c">// we'll only require 2FA factors, that are allowed by the policy</span></div>
<div class="ln" style="top:1432.60px;color:#9198a1">194</div>
<div class="cl" style="top:1432.60px">    allowedFactors <span class="b">:=</span> allowed2FAFactors(requirements.<span class="b">AllowedSecondFactors</span>, requirements.<span class="b">SetUpFactors</span>)</div>
<div class="ln" style="top:1456.60px;color:#9198a1">195</div>
<div class="cl" style="top:1456.60px">    <span class="c">// if either the user has set up a factor that is allowed by the policy</span></div>
<div class="ln" style="top:1480.60px;color:#9198a1">196</div>
<div class="cl" style="top:1480.60px">    <span class="c">// or the policy requires MFA, we'll require it and can directly return the error</span></div>
<div class="ln" style="top:1504.60px;color:#9198a1">197</div>
<svg style="left:847.300px;top:898.300px" width="22" height="22.500" viewBox="0 0 19 20"><path d="M6.200 2.300a1.300 1.300 0 0 1 2.600 0V7a1.250 1.250 0 0 1 2.500 0v.600a1.250 1.250 0 0 1 2.500 0v.800a1.200 1.200 0 0 1 2.400 0V13c0 3.200-1.600 5-3.400 5H8.300c-1.600 0-2.700-.9-3.700-2.400L1.300 11.700c-.9-1.300.9-2.900 2.100-1.700l2.800 2.600z" fill="#fff" stroke="#000" stroke-width="1.100" stroke-linejoin="round"/><path d="M8.800 7v3.500M11.300 7.600v2.900M13.800 8.400v2.100" stroke="#000" stroke-width=".9" stroke-linecap="round"/></svg>
<div class="a" style="left:2248px;top:760px;width:3px;height:160px;background:#20252d;border-radius:1.5px;"></div>
</div></div>
</body></html>
